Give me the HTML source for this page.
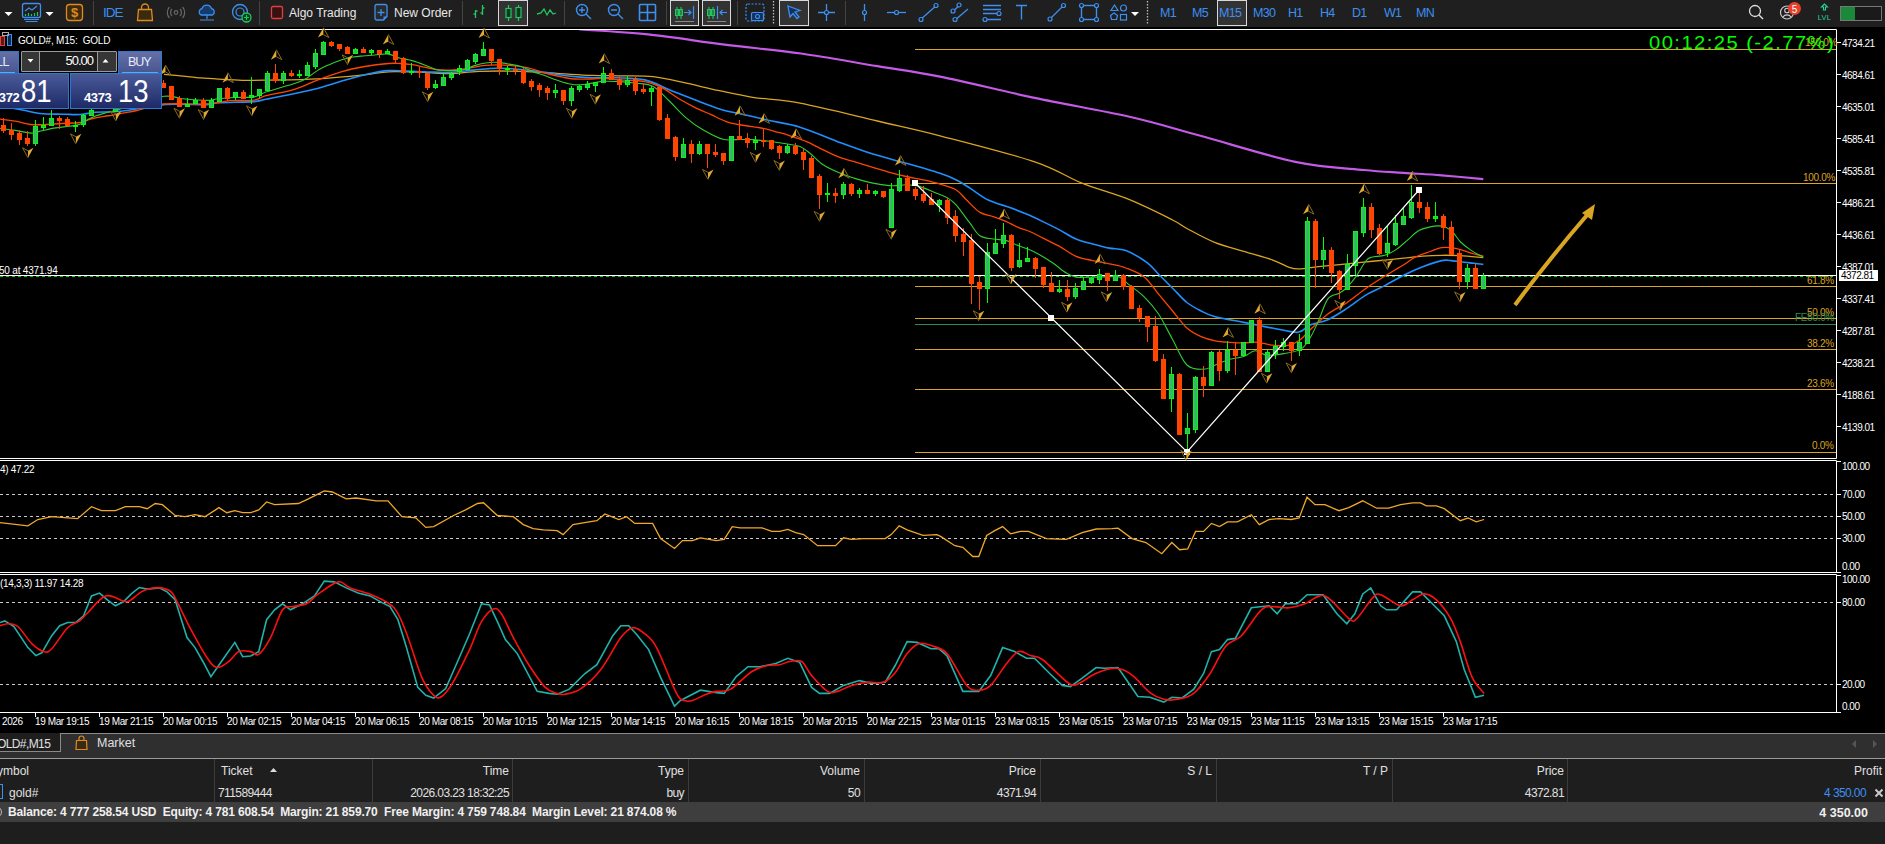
<!DOCTYPE html>
<html><head><meta charset="utf-8">
<style>
*{margin:0;padding:0;box-sizing:border-box}
html,body{width:1885px;height:844px;overflow:hidden;background:#000;font-family:"Liberation Sans",sans-serif}
.a{position:absolute;white-space:nowrap}
.ax{position:absolute;font-size:10px;line-height:10px;color:#fff;white-space:nowrap;letter-spacing:-0.5px}
.fb{position:absolute;font-size:10px;line-height:10px;color:#daa520;white-space:nowrap;letter-spacing:-0.3px}
.tl{position:absolute;top:717px;font-size:10px;line-height:10px;color:#fff;white-space:nowrap;letter-spacing:-0.4px}
.tbt{position:absolute;top:6px;font-size:12px;line-height:15px;color:#e8e8e8;white-space:nowrap}
.tbb{position:absolute;top:6px;font-size:13px;line-height:15px;color:#3d8ff0;white-space:nowrap}
.th{position:absolute;top:764px;font-size:12px;line-height:14px;color:#e0e0e0;white-space:nowrap}
.td{position:absolute;top:787px;font-size:12px;line-height:13px;color:#e0e0e0;white-space:nowrap;letter-spacing:-0.6px}
</style></head><body>

<div class="a" style="left:0;top:0;width:1885px;height:27px;background:#1f1f1f"></div>
<svg class="a" style="left:0;top:0" width="1885" height="27"><path d="M4.5 12 h8 l-4 4 z" fill="#fff"/><path d="M45.5 12 h8 l-4 4 z" fill="#fff"/><path d="M1131 12 h8 l-4 4 z" fill="#fff"/><rect x="22.5" y="3.5" width="18" height="14" rx="2" fill="none" stroke="#3d8ff0" stroke-width="1.3"/><path d="M25 11 l4 -3 l3 2 l5 -4" fill="none" stroke="#3d8ff0" stroke-width="1.2"/><path d="M25.5 16v-2 M28.5 16v-3 M31.5 16v-2 M34.5 16v-3 M37.5 16v-4" stroke="#22c55e" stroke-width="1.2"/><path d="M24 19.5 h15 M25.5 21.5 h12" stroke="#3d8ff0" stroke-width="1.2"/><rect x="66.5" y="4.5" width="16" height="16" rx="3" fill="#3a2a10" stroke="#e08a1e" stroke-width="1.3"/><text x="74.5" y="17" font-size="13" font-weight="bold" fill="#e08a1e" text-anchor="middle" font-family="Liberation Sans">$</text><path d="M93.5 1 v24" stroke="#444" stroke-width="1"/><path d="M259.5 1 v24" stroke="#444" stroke-width="1"/><path d="M462.5 1 v24" stroke="#444" stroke-width="1"/><path d="M564.5 1 v24" stroke="#444" stroke-width="1"/><path d="M666.5 1 v24" stroke="#444" stroke-width="1"/><path d="M737.5 1 v24" stroke="#444" stroke-width="1"/><path d="M845.5 1 v24" stroke="#444" stroke-width="1"/><path d="M773.5 1 v24" stroke="#bbb" stroke-width="1.3" stroke-dasharray="1.5 1.5"/><path d="M1147.5 1 v24" stroke="#bbb" stroke-width="1.3" stroke-dasharray="1.5 1.5"/><path d="M138.5 9.5 h13 l1 11 h-15 z" fill="#3a2a10" stroke="#e08a1e" stroke-width="1.3"/><path d="M141.5 9.5 v-2 a3.5 3.5 0 0 1 7 0 v2" fill="none" stroke="#e08a1e" stroke-width="1.3"/><circle cx="176" cy="12.5" r="1.8" fill="none" stroke="#666" stroke-width="1.2"/><path d="M172 9 a5 5 0 0 0 0 7 M180 9 a5 5 0 0 1 0 7 M169.5 7 a8 8 0 0 0 0 11 M182.5 7 a8 8 0 0 1 0 11" fill="none" stroke="#666" stroke-width="1.2"/><path d="M201 15 a3.5 3.5 0 0 1 1 -6.5 a5 5 0 0 1 9.5 0 a3.5 3.5 0 0 1 1 6.5 z" fill="#163a6a" stroke="#3d8ff0" stroke-width="1.3"/><path d="M207 15 v4 M200 20 h14" stroke="#3d8ff0" stroke-width="1.2"/><circle cx="240" cy="12" r="7.5" fill="none" stroke="#3d8ff0" stroke-width="1.3"/><circle cx="240" cy="12" r="4" fill="none" stroke="#3d8ff0" stroke-width="1.2"/><circle cx="246.5" cy="17.5" r="4.5" fill="#0b3a20" stroke="#22c55e" stroke-width="1.3"/><path d="M246.5 15 v5 M244 17.5 h5" stroke="#22c55e" stroke-width="1.2"/><rect x="271.5" y="6.5" width="11" height="12" rx="1.5" fill="#3a1010" stroke="#e04040" stroke-width="1.3"/><path d="M377 4.5 h8 a2 2 0 0 1 2 2 v10 l-3.5 3.5 h-6.5 a2 2 0 0 1 -2 -2 v-11.5 a2 2 0 0 1 2 -2 z" fill="#2a2a2a" stroke="#3d8ff0" stroke-width="1.3"/><path d="M387 16.5 l-3.5 3.5 v-3.5 z" fill="#3d8ff0"/><path d="M381 9 v7 M377.5 12.5 h7" stroke="#3d8ff0" stroke-width="1.3"/><path d="M475.5 18 v-8 M475.5 14 h-2 M475.5 11 h2 M482.5 15 v-10 M482.5 8 h2 M482.5 13 h-2" stroke="#22c55e" stroke-width="1.3"/><rect x="498.5" y="0.5" width="29" height="25" fill="#333" stroke="#d8d8d8" stroke-width="1"/><path d="M508.5 5 v16 M518.5 5 v16" stroke="#22c55e" stroke-width="1.2"/><rect x="506" y="8.5" width="5" height="9" fill="#0b3a20" stroke="#22c55e" stroke-width="1.2"/><rect x="516" y="7.5" width="5" height="10" fill="#0b3a20" stroke="#22c55e" stroke-width="1.2"/><path d="M537 14 l4 -1 l3 -4 l3 6 l3 -5 l3 4 l3 -1" fill="none" stroke="#22c55e" stroke-width="1.3"/><circle cx="582" cy="10" r="5.5" fill="none" stroke="#3d8ff0" stroke-width="1.4"/><path d="M586 14 l5 5 M579 10 h6 M582 7 v6" stroke="#3d8ff0" stroke-width="1.4"/><circle cx="614" cy="10" r="5.5" fill="none" stroke="#3d8ff0" stroke-width="1.4"/><path d="M618 14 l5 5 M611 10 h6" stroke="#3d8ff0" stroke-width="1.4"/><rect x="639.5" y="4.5" width="16" height="16" rx="1" fill="none" stroke="#3d8ff0" stroke-width="1.6"/><path d="M647.5 4.5 v16 M639.5 12.5 h16" stroke="#3d8ff0" stroke-width="1.6"/><rect x="670.5" y="0.5" width="28" height="25" fill="#333" stroke="#d8d8d8" stroke-width="1"/><rect x="702.5" y="0.5" width="28" height="25" fill="#333" stroke="#d8d8d8" stroke-width="1"/><path d="M677 7 v12 M681 7 v12" stroke="#22c55e" stroke-width="1.1"/><rect x="675.5" y="9.5" width="3" height="6" fill="none" stroke="#22c55e"/><rect x="679.5" y="9.5" width="3" height="6" fill="none" stroke="#22c55e"/><path d="M684 12.5 h7 M688.5 10 l2.5 2.5 l-2.5 2.5 M693.5 6 v13" fill="none" stroke="#3d8ff0" stroke-width="1.2"/><path d="M675 21.5 h19" stroke="#888" stroke-width="1"/><path d="M709 7 v12 M713 7 v12" stroke="#22c55e" stroke-width="1.1"/><rect x="707.5" y="9.5" width="3" height="6" fill="none" stroke="#22c55e"/><rect x="711.5" y="9.5" width="3" height="6" fill="none" stroke="#22c55e"/><path d="M717.5 6 v13 M720 12.5 h7 M722.5 10 l-2.5 2.5 l2.5 2.5" fill="none" stroke="#3d8ff0" stroke-width="1.2"/><path d="M707 21.5 h19" stroke="#888" stroke-width="1"/><rect x="746" y="4" width="18" height="17" rx="2" fill="none" stroke="#3d8ff0" stroke-width="1.2" stroke-dasharray="2 1.5"/><rect x="751.5" y="12.5" width="12" height="8" rx="1" fill="#14305a" stroke="#3d8ff0" stroke-width="1.2"/><circle cx="757.5" cy="16.5" r="2" fill="none" stroke="#3d8ff0" stroke-width="1.1"/><rect x="779.5" y="0.5" width="29" height="25" fill="#333" stroke="#d8d8d8" stroke-width="1"/><path d="M788 6 l12 4.5 l-5 1.5 l4 5 l-2 1.5 l-4 -5 l-3 3.5 z" fill="#14305a" stroke="#3d8ff0" stroke-width="1.3"/><path d="M826.5 4 v17 M818 12.5 h17" stroke="#3d8ff0" stroke-width="1.3"/><circle cx="826.5" cy="12.5" r="2" fill="#1f1f1f" stroke="#3d8ff0" stroke-width="1.2"/><path d="M864.5 4 v17" stroke="#3d8ff0" stroke-width="1.3"/><circle cx="864.5" cy="12.5" r="2" fill="#1f1f1f" stroke="#3d8ff0" stroke-width="1.2"/><path d="M887 12.5 h19" stroke="#3d8ff0" stroke-width="1.3"/><circle cx="896.5" cy="12.5" r="2" fill="#1f1f1f" stroke="#3d8ff0" stroke-width="1.2"/><path d="M920 20 l17 -15" stroke="#3d8ff0" stroke-width="1.3"/><circle cx="921" cy="19.5" r="2" fill="#1f1f1f" stroke="#3d8ff0" stroke-width="1.2"/><circle cx="936" cy="5.5" r="2" fill="#1f1f1f" stroke="#3d8ff0" stroke-width="1.2"/><path d="M951 13 l10 -9 M954 21 l14 -12" stroke="#3d8ff0" stroke-width="1.3"/><circle cx="953" cy="11" r="2" fill="#1f1f1f" stroke="#3d8ff0" stroke-width="1.2"/><circle cx="959" cy="5" r="2" fill="#1f1f1f" stroke="#3d8ff0" stroke-width="1.2"/><circle cx="955" cy="19.5" r="2" fill="#1f1f1f" stroke="#3d8ff0" stroke-width="1.2"/><path d="M983 5.5 h18 M983 9.5 h18 M983 13.5 h14 M983 19.5 h18" stroke="#3d8ff0" stroke-width="1.3"/><circle cx="999" cy="13.5" r="2" fill="#1f1f1f" stroke="#3d8ff0" stroke-width="1.2"/><circle cx="985" cy="19.5" r="2" fill="#1f1f1f" stroke="#3d8ff0" stroke-width="1.2"/><path d="M1016 5.5 h11 M1021.5 5.5 v14" stroke="#3d8ff0" stroke-width="1.4"/><path d="M1050 19 l14 -14" stroke="#3d8ff0" stroke-width="1.3"/><circle cx="1050" cy="19" r="2" fill="#1f1f1f" stroke="#3d8ff0" stroke-width="1.2"/><circle cx="1063.5" cy="5.5" r="2" fill="#1f1f1f" stroke="#3d8ff0" stroke-width="1.2"/><rect x="1081.5" y="5.5" width="15" height="14" fill="none" stroke="#3d8ff0" stroke-width="1.4"/><circle cx="1081.5" cy="5.5" r="2" fill="#1f1f1f" stroke="#3d8ff0" stroke-width="1.2"/><circle cx="1096.5" cy="5.5" r="2" fill="#1f1f1f" stroke="#3d8ff0" stroke-width="1.2"/><circle cx="1081.5" cy="19.5" r="2" fill="#1f1f1f" stroke="#3d8ff0" stroke-width="1.2"/><circle cx="1096.5" cy="19.5" r="2" fill="#1f1f1f" stroke="#3d8ff0" stroke-width="1.2"/><path d="M1114.5 5 l3.5 5.5 h-7 z M1110.5 15.5 l3.5 -2.5 l3.5 2.5 l-1 4 h-5 z" fill="none" stroke="#3d8ff0" stroke-width="1.2"/><circle cx="1123.5" cy="8" r="3" fill="none" stroke="#3d8ff0" stroke-width="1.2"/><rect x="1120.5" y="14.5" width="6" height="5.5" fill="none" stroke="#3d8ff0" stroke-width="1.2"/><rect x="1217.5" y="0.5" width="29" height="25" fill="#333" stroke="#d8d8d8" stroke-width="1"/><circle cx="1755" cy="11" r="5.5" fill="none" stroke="#ddd" stroke-width="1.3"/><path d="M1759 15 l4 4" stroke="#ddd" stroke-width="1.5"/><circle cx="1787" cy="12.5" r="6.5" fill="none" stroke="#ccc" stroke-width="1.2"/><circle cx="1787" cy="10.5" r="2.3" fill="none" stroke="#ccc" stroke-width="1.1"/><path d="M1783 17 a4.5 4 0 0 1 8 0" fill="none" stroke="#ccc" stroke-width="1.1"/><circle cx="1794.5" cy="8.5" r="6.5" fill="#e8402a"/><text x="1794.5" y="12.5" font-size="10" fill="#fff" text-anchor="middle" font-family="Liberation Sans">5</text><path d="M1824.5 4 l-3 3 h2 v3 h2 v-3 h2 z" fill="none" stroke="#22d3a0" stroke-width="1.1"/><text x="1824.5" y="20" font-size="7.5" fill="#22d3a0" text-anchor="middle" font-family="Liberation Sans" letter-spacing="0.3">LVL</text><rect x="1840.5" y="6.5" width="41" height="14" fill="#1a1a1a" stroke="#777" stroke-width="1"/><rect x="1841" y="7" width="14" height="13" fill="#1a8a3a"/></svg>
<div class="tbb" style="left:103px;top:5px;font-size:13.5px;letter-spacing:-1px">IDE</div>
<div class="tbt" style="left:289px">Algo Trading</div>
<div class="tbt" style="left:394px">New Order</div>
<div class="tbb" style="left:1160px;font-size:12.5px;letter-spacing:-0.7px">M1</div>
<div class="tbb" style="left:1192px;font-size:12.5px;letter-spacing:-0.7px">M5</div>
<div class="tbb" style="left:1219px;font-size:12.5px;letter-spacing:-0.7px">M15</div>
<div class="tbb" style="left:1253px;font-size:12.5px;letter-spacing:-0.7px">M30</div>
<div class="tbb" style="left:1288px;font-size:12.5px;letter-spacing:-0.7px">H1</div>
<div class="tbb" style="left:1320px;font-size:12.5px;letter-spacing:-0.7px">H4</div>
<div class="tbb" style="left:1352px;font-size:12.5px;letter-spacing:-0.7px">D1</div>
<div class="tbb" style="left:1384px;font-size:12.5px;letter-spacing:-0.7px">W1</div>
<div class="tbb" style="left:1416px;font-size:12.5px;letter-spacing:-0.7px">MN</div>
<svg class="a" style="left:0;top:0" width="1885" height="733"><defs><clipPath id="cm"><rect x="0" y="30" width="1836" height="428"/></clipPath></defs><rect x="0" y="29" width="1885" height="704" fill="#000"/><path d="M0 29.5 H1836.5 V458.5 H0 M0 460.5 H1836.5 V572.5 H0 M0 574.5 H1836.5 V712.5 H0" fill="none" stroke="#fff" stroke-width="1"/><path d="M1836 42.5 h5" stroke="#fff"/><path d="M1836 74.5 h5" stroke="#fff"/><path d="M1836 106.5 h5" stroke="#fff"/><path d="M1836 138.5 h5" stroke="#fff"/><path d="M1836 170.5 h5" stroke="#fff"/><path d="M1836 202.5 h5" stroke="#fff"/><path d="M1836 234.5 h5" stroke="#fff"/><path d="M1836 266.5 h5" stroke="#fff"/><path d="M1836 298.5 h5" stroke="#fff"/><path d="M1836 330.5 h5" stroke="#fff"/><path d="M1836 362.5 h5" stroke="#fff"/><path d="M1836 394.5 h5" stroke="#fff"/><path d="M1836 426.5 h5" stroke="#fff"/><path d="M1836 461.5 h5" stroke="#fff"/><path d="M1836 494.5 h5" stroke="#fff"/><path d="M1836 516.5 h5" stroke="#fff"/><path d="M1836 538.5 h5" stroke="#fff"/><path d="M1836 572.5 h5" stroke="#fff"/><path d="M1836 575.5 h5" stroke="#fff"/><path d="M1836 602.5 h5" stroke="#fff"/><path d="M1836 684.5 h5" stroke="#fff"/><path d="M1836 712.5 h5" stroke="#fff"/><path d="M0 494.5 H1836" stroke="#c8c8c8" stroke-dasharray="3 3"/><path d="M0 516.5 H1836" stroke="#c8c8c8" stroke-dasharray="3 3"/><path d="M0 538.5 H1836" stroke="#c8c8c8" stroke-dasharray="3 3"/><path d="M0 602.5 H1836" stroke="#c8c8c8" stroke-dasharray="3 3"/><path d="M0 684.5 H1836" stroke="#c8c8c8" stroke-dasharray="3 3"/><path d="M35.5 712 v5" stroke="#fff"/><path d="M99.5 712 v5" stroke="#fff"/><path d="M163.5 712 v5" stroke="#fff"/><path d="M227.5 712 v5" stroke="#fff"/><path d="M291.5 712 v5" stroke="#fff"/><path d="M355.5 712 v5" stroke="#fff"/><path d="M419.5 712 v5" stroke="#fff"/><path d="M483.5 712 v5" stroke="#fff"/><path d="M547.5 712 v5" stroke="#fff"/><path d="M611.5 712 v5" stroke="#fff"/><path d="M675.5 712 v5" stroke="#fff"/><path d="M739.5 712 v5" stroke="#fff"/><path d="M803.5 712 v5" stroke="#fff"/><path d="M867.5 712 v5" stroke="#fff"/><path d="M931.5 712 v5" stroke="#fff"/><path d="M995.5 712 v5" stroke="#fff"/><path d="M1059.5 712 v5" stroke="#fff"/><path d="M1123.5 712 v5" stroke="#fff"/><path d="M1187.5 712 v5" stroke="#fff"/><path d="M1251.5 712 v5" stroke="#fff"/><path d="M1315.5 712 v5" stroke="#fff"/><path d="M1379.5 712 v5" stroke="#fff"/><path d="M1443.5 712 v5" stroke="#fff"/><path d="M915 49.5 H1836" stroke="#daa520"/><path d="M915 183.5 H1836" stroke="#daa520"/><path d="M915 286.5 H1836" stroke="#daa520"/><path d="M915 318.5 H1836" stroke="#daa520"/><path d="M915 349.5 H1836" stroke="#daa520"/><path d="M915 389.5 H1836" stroke="#daa520"/><path d="M915 452.5 H1836" stroke="#daa520"/><path d="M915 324.5 H1836" stroke="#2e8b57"/><path d="M0 275.5 H1836" stroke="#fff" stroke-width="1"/><path d="M0 276.5 H1836" stroke="#00d000" stroke-dasharray="3 3"/><path d="M579.5 29.5 C590.9 30.3 623.8 31.9 648.0 34.4 C672.2 36.9 699.1 41.4 724.6 44.6 C750.1 47.8 775.5 49.9 801.0 53.5 C826.5 57.1 854.2 62.4 877.4 66.2 C900.6 70.0 913.8 71.3 940.0 76.6 C966.2 81.9 1003.1 91.2 1034.7 97.9 C1066.3 104.6 1101.9 110.5 1129.5 116.8 C1157.1 123.1 1172.9 128.3 1200.5 135.8 C1228.1 143.3 1268.1 156.1 1295.3 161.8 C1322.5 167.5 1345.8 168.2 1363.9 170.0 C1382.0 171.8 1390.8 171.9 1403.7 172.8 C1416.7 173.7 1428.3 174.2 1441.6 175.3 C1454.9 176.4 1476.3 178.5 1483.3 179.1" clip-path="url(#cm)" fill="none" stroke="#c45ae6" stroke-width="2.2"/><path d="M164.0 74.4 C167.2 74.7 176.8 75.5 182.9 76.1 C189.0 76.7 194.8 77.4 200.7 77.9 C206.6 78.4 211.6 78.7 218.5 79.1 C225.4 79.5 233.6 80.1 242.2 80.3 C250.8 80.5 257.5 80.3 270.0 80.1 C282.5 79.9 301.6 79.8 317.4 78.9 C333.2 78.0 352.9 76.0 364.8 74.8 C376.7 73.6 378.6 72.2 388.5 71.8 C398.4 71.4 413.8 72.1 424.0 72.4 C434.2 72.7 440.7 73.8 450.0 73.6 C459.3 73.4 467.8 71.7 479.6 71.3 C491.5 70.9 509.2 71.0 521.1 71.3 C533.0 71.6 542.8 72.5 550.7 73.0 C558.6 73.5 561.6 73.8 568.5 74.2 C575.4 74.6 583.6 75.1 592.2 75.4 C600.8 75.7 609.8 75.6 620.0 75.8 C630.2 76.0 642.1 75.4 653.2 76.6 C664.3 77.8 675.4 80.8 686.4 83.2 C697.4 85.6 708.5 88.4 719.5 90.7 C730.5 93.0 739.3 95.2 752.7 97.3 C766.1 99.4 779.2 99.1 800.0 103.1 C820.8 107.0 854.1 115.5 877.4 121.0 C900.7 126.5 913.8 129.0 940.0 135.8 C966.2 142.6 1011.0 153.9 1034.7 161.8 C1058.4 169.7 1066.2 176.9 1082.0 183.2 C1097.8 189.5 1114.4 193.6 1129.5 199.7 C1144.6 205.8 1163.0 215.2 1172.6 220.0 C1182.2 224.8 1179.8 224.7 1186.9 228.5 C1194.0 232.3 1205.8 238.9 1215.3 242.7 C1224.8 246.5 1234.2 248.5 1243.7 251.3 C1253.2 254.2 1264.5 257.1 1272.2 259.8 C1279.9 262.5 1285.5 266.1 1290.0 267.6 C1294.5 269.1 1294.8 269.0 1299.5 268.9 C1304.2 268.8 1310.5 267.5 1318.4 266.7 C1326.3 265.9 1337.4 264.8 1346.9 263.8 C1356.4 262.9 1365.8 261.9 1375.3 261.0 C1384.8 260.1 1395.8 258.9 1403.7 258.1 C1411.6 257.3 1416.4 256.7 1422.7 256.2 C1429.0 255.7 1435.3 255.4 1441.6 255.3 C1447.9 255.2 1453.6 255.3 1460.6 255.7 C1467.5 256.1 1479.5 257.3 1483.3 257.6" fill="none" stroke="#daa520" stroke-width="1.3"/><path d="M0.0 106.0 C3.7 106.7 15.6 108.8 22.3 110.0 C29.0 111.2 33.1 112.8 40.0 113.5 C46.9 114.2 57.2 114.0 63.9 114.2 C70.6 114.4 74.8 114.8 80.0 114.5 C85.2 114.2 89.8 112.8 94.9 112.3 C100.1 111.8 105.6 112.1 110.9 111.8 C116.2 111.5 118.1 111.7 126.9 110.5 C135.8 109.3 150.7 105.6 164.0 104.6 C177.3 103.6 197.5 104.9 206.6 104.6 C215.7 104.3 210.6 103.3 218.5 102.8 C226.4 102.3 246.1 102.2 254.0 101.6 C261.9 101.0 263.2 99.7 265.9 99.2 C268.6 98.7 265.4 99.4 270.0 98.5 C274.6 97.6 285.8 95.4 293.7 93.7 C301.6 92.0 309.5 90.5 317.4 88.4 C325.3 86.3 333.2 83.6 341.1 81.3 C349.0 79.0 356.9 76.6 364.8 74.8 C372.7 73.0 378.6 71.1 388.5 70.6 C398.4 70.1 413.8 71.5 424.0 71.8 C434.2 72.1 441.7 72.7 450.0 72.4 C458.3 72.1 465.8 70.8 473.7 70.1 C481.6 69.4 489.5 68.4 497.4 68.3 C505.3 68.2 513.2 68.8 521.1 69.5 C529.0 70.2 536.9 71.3 544.8 72.4 C552.7 73.5 560.6 75.1 568.5 76.0 C576.4 76.9 584.3 77.5 592.2 77.8 C600.1 78.1 607.1 77.4 615.9 77.8 C624.7 78.2 635.9 77.9 644.9 79.9 C653.9 81.9 661.5 86.6 669.8 89.9 C678.1 93.2 686.4 96.6 694.7 99.8 C703.0 103.0 711.2 106.4 719.5 108.9 C727.8 111.4 736.1 112.8 744.4 114.7 C752.7 116.6 760.0 118.4 769.3 120.5 C778.6 122.6 788.2 123.5 800.0 127.2 C811.8 130.8 827.6 137.9 839.8 142.4 C851.9 146.9 861.8 150.6 872.9 154.1 C884.0 157.6 895.0 160.0 906.1 163.2 C917.2 166.4 931.0 170.3 939.3 173.1 C947.6 175.9 950.8 177.3 955.9 179.8 C961.0 182.3 964.6 184.7 970.0 188.1 C975.4 191.5 981.6 196.8 988.2 200.0 C994.8 203.2 1003.4 205.2 1009.8 207.5 C1016.2 209.8 1020.9 211.8 1026.4 214.1 C1031.9 216.4 1037.4 219.0 1042.9 221.6 C1048.4 224.2 1054.0 227.0 1059.5 229.9 C1065.0 232.8 1070.6 236.7 1076.1 239.0 C1081.6 241.3 1087.2 242.5 1092.7 244.0 C1098.2 245.5 1103.8 247.0 1109.3 248.1 C1114.8 249.2 1119.6 248.2 1125.9 250.6 C1132.2 253.0 1141.7 258.7 1147.1 262.6 C1152.5 266.5 1154.2 269.7 1158.4 274.0 C1162.7 278.3 1167.8 283.4 1172.6 288.2 C1177.3 292.9 1182.2 298.7 1186.9 302.5 C1191.7 306.3 1196.4 308.6 1201.1 311.0 C1205.8 313.4 1208.2 314.8 1215.3 316.7 C1222.4 318.6 1234.2 320.5 1243.7 322.4 C1253.2 324.3 1263.2 326.4 1272.2 328.0 C1281.2 329.6 1291.5 332.8 1297.8 332.3 C1304.1 331.8 1305.0 327.1 1310.0 325.0 C1315.0 322.9 1321.8 322.5 1327.9 319.7 C1334.1 316.9 1340.6 312.5 1346.9 308.4 C1353.2 304.3 1359.5 298.9 1365.8 295.1 C1372.1 291.3 1378.5 288.9 1384.8 285.6 C1391.1 282.3 1397.4 278.4 1403.7 275.2 C1410.0 272.0 1416.4 269.1 1422.7 266.7 C1429.0 264.3 1436.9 261.6 1441.6 260.6 C1446.3 259.6 1446.3 260.2 1451.1 260.6 C1455.8 261.0 1464.7 262.3 1470.1 262.9 C1475.5 263.5 1481.1 264.1 1483.3 264.4" fill="none" stroke="#1e90ff" stroke-width="1.6"/><path d="M0.0 119.2 C2.6 119.5 10.3 120.3 15.4 121.2 C20.5 122.1 25.7 124.0 30.8 124.5 C35.9 125.0 41.1 124.7 46.2 124.5 C51.3 124.3 56.0 123.8 61.6 123.5 C67.2 123.2 75.2 123.2 80.0 122.5 C84.8 121.8 86.7 120.0 90.7 119.0 C94.7 118.0 100.5 116.9 104.0 116.3 C107.5 115.7 108.9 115.8 112.0 115.3 C115.1 114.8 118.4 113.9 122.6 113.1 C126.8 112.3 130.1 112.0 137.0 110.5 C143.9 109.0 152.4 105.1 164.0 104.0 C175.6 102.9 195.5 104.5 206.6 104.0 C217.7 103.5 222.4 101.3 230.3 100.7 C238.2 100.1 248.1 101.0 254.0 100.2 C259.9 99.4 259.3 97.5 265.9 95.7 C272.5 93.9 285.1 92.2 293.7 89.6 C302.3 87.0 309.5 83.1 317.4 80.1 C325.3 77.1 333.2 74.1 341.1 71.8 C349.0 69.5 356.9 67.9 364.8 66.5 C372.7 65.1 382.6 64.0 388.5 63.5 C394.4 63.0 396.4 63.3 400.3 63.5 C404.2 63.7 408.2 64.1 412.1 64.7 C416.1 65.3 420.1 66.3 424.0 67.1 C427.9 67.9 431.5 69.0 435.8 69.5 C440.1 70.0 444.7 70.3 450.0 70.1 C455.3 69.9 461.9 69.1 467.8 68.3 C473.7 67.5 478.6 65.8 485.5 65.3 C492.4 64.8 502.3 64.9 509.2 65.3 C516.1 65.7 521.1 66.4 527.0 67.7 C532.9 69.0 538.9 71.4 544.8 73.0 C550.7 74.6 557.7 76.2 562.6 77.2 C567.5 78.2 569.5 78.7 574.4 79.0 C579.3 79.3 587.3 79.1 592.2 79.0 C597.1 78.9 599.4 78.2 604.0 78.4 C608.6 78.6 613.2 79.4 620.0 79.9 C626.8 80.4 638.0 80.3 644.9 81.6 C651.8 82.8 656.0 84.6 661.5 87.4 C667.0 90.2 672.6 94.9 678.1 98.2 C683.6 101.5 689.2 104.5 694.7 107.3 C700.2 110.0 705.7 112.2 711.2 114.7 C716.7 117.2 722.3 120.4 727.8 122.2 C733.3 124.0 738.9 124.5 744.4 125.5 C749.9 126.5 755.5 126.9 761.0 128.0 C766.5 129.1 772.8 130.9 777.6 132.2 C782.4 133.5 785.2 134.2 790.0 135.8 C794.8 137.4 801.1 139.2 806.6 141.6 C812.1 143.9 817.7 147.3 823.2 149.9 C828.7 152.5 834.3 155.3 839.8 157.4 C845.3 159.5 850.9 160.7 856.4 162.3 C861.9 164.0 867.4 165.6 872.9 167.3 C878.4 169.0 884.0 170.8 889.5 172.3 C895.0 173.8 900.6 175.2 906.1 176.5 C911.6 177.8 917.2 178.6 922.7 179.8 C928.2 181.0 933.8 182.2 939.3 183.9 C944.8 185.6 951.3 187.0 955.9 189.7 C960.5 192.4 962.6 196.2 966.6 200.0 C970.6 203.8 975.5 209.6 979.9 212.4 C984.3 215.2 988.8 215.1 993.2 216.6 C997.6 218.1 1002.2 219.8 1006.4 221.6 C1010.5 223.4 1014.2 225.8 1018.1 227.4 C1022.0 229.1 1025.5 229.7 1029.7 231.5 C1033.9 233.3 1038.0 235.7 1043.0 238.2 C1048.0 240.7 1054.0 243.4 1059.5 246.4 C1065.0 249.4 1070.6 254.0 1076.1 256.4 C1081.6 258.8 1087.2 259.4 1092.7 260.6 C1098.2 261.9 1103.8 262.7 1109.3 263.9 C1114.8 265.1 1120.1 265.8 1125.9 268.0 C1131.7 270.2 1138.8 272.6 1144.2 276.9 C1149.6 281.2 1153.7 288.2 1158.4 293.9 C1163.1 299.6 1167.8 305.3 1172.6 311.0 C1177.3 316.7 1182.2 323.7 1186.9 328.0 C1191.7 332.3 1196.4 334.5 1201.1 336.6 C1205.8 338.7 1210.6 339.9 1215.3 340.8 C1220.0 341.8 1224.8 342.0 1229.5 342.3 C1234.2 342.6 1239.0 342.8 1243.7 342.8 C1248.4 342.8 1253.2 341.9 1257.9 342.3 C1262.7 342.7 1267.0 344.6 1272.2 345.1 C1277.4 345.6 1284.5 346.1 1289.2 345.1 C1293.9 344.2 1297.1 341.9 1300.6 339.4 C1304.1 336.9 1305.5 334.2 1310.0 330.0 C1314.5 325.8 1321.8 318.6 1327.9 314.0 C1334.1 309.4 1340.6 306.9 1346.9 302.7 C1353.2 298.4 1359.5 292.9 1365.8 288.5 C1372.1 284.1 1378.5 280.1 1384.8 276.1 C1391.1 272.2 1398.7 268.0 1403.7 264.8 C1408.8 261.6 1410.7 259.4 1415.1 257.2 C1419.5 255.0 1425.9 253.1 1430.3 251.5 C1434.7 249.9 1438.1 248.3 1441.6 247.7 C1445.1 247.1 1447.9 247.4 1451.1 247.7 C1454.3 248.0 1457.1 248.6 1460.6 249.6 C1464.1 250.6 1468.2 252.3 1472.0 253.4 C1475.8 254.5 1481.4 255.7 1483.3 256.2" fill="none" stroke="#ff4500" stroke-width="1.3"/><path d="M0.0 128.5 C2.6 128.8 10.3 129.6 15.4 130.4 C20.5 131.2 26.9 132.9 30.8 133.1 C34.6 133.3 34.6 132.4 38.5 131.6 C42.4 130.8 48.8 129.0 53.9 128.1 C59.0 127.2 65.0 126.8 69.3 126.2 C73.6 125.6 76.9 125.4 80.0 124.3 C83.1 123.2 85.3 120.9 88.0 119.5 C90.7 118.1 93.3 116.8 96.0 115.8 C98.7 114.8 100.9 114.3 104.0 113.4 C107.1 112.5 110.3 111.7 114.6 110.5 C118.9 109.3 121.8 108.4 130.0 106.0 C138.2 103.6 155.2 97.5 164.0 96.3 C172.8 95.1 175.8 98.0 182.9 98.7 C190.0 99.4 200.7 100.4 206.6 100.4 C212.5 100.4 213.6 99.2 218.5 98.7 C223.4 98.2 230.4 97.8 236.3 97.5 C242.2 97.2 249.1 97.8 254.0 96.9 C258.9 96.0 261.3 93.7 265.9 92.1 C270.5 90.5 277.2 88.6 281.8 87.2 C286.4 85.8 289.8 85.1 293.7 83.7 C297.6 82.3 301.6 81.1 305.5 78.9 C309.4 76.7 313.4 73.0 317.4 70.6 C321.3 68.2 325.2 66.5 329.2 64.7 C333.1 62.9 337.2 61.3 341.1 60.0 C345.1 58.7 348.9 57.7 352.9 57.0 C356.8 56.3 360.9 56.2 364.8 55.8 C368.8 55.4 372.7 55.0 376.6 54.7 C380.6 54.4 384.6 53.5 388.5 54.1 C392.4 54.7 396.4 57.1 400.3 58.2 C404.2 59.3 408.2 59.5 412.1 60.6 C416.1 61.7 420.1 63.2 424.0 64.7 C427.9 66.2 431.9 68.5 435.8 69.5 C439.8 70.5 443.4 70.5 447.7 70.6 C452.0 70.7 457.5 70.9 461.8 70.1 C466.1 69.3 469.8 67.1 473.7 65.9 C477.6 64.7 481.6 63.6 485.5 63.0 C489.4 62.4 493.4 62.2 497.4 62.4 C501.3 62.6 505.2 63.4 509.2 64.1 C513.1 64.8 517.1 65.2 521.1 66.5 C525.1 67.8 529.0 70.3 533.0 71.8 C537.0 73.3 540.9 74.0 544.8 75.4 C548.7 76.8 552.6 78.7 556.6 80.1 C560.6 81.5 564.5 82.9 568.5 83.7 C572.5 84.5 576.3 85.0 580.3 84.9 C584.2 84.8 588.2 83.7 592.2 83.1 C596.2 82.5 599.4 81.5 604.0 81.3 C608.6 81.0 614.6 81.3 620.0 81.6 C625.4 81.9 631.1 82.4 636.6 83.2 C642.1 84.0 647.7 83.5 653.2 86.5 C658.7 89.5 664.3 96.2 669.8 101.5 C675.3 106.8 680.9 113.4 686.4 118.1 C691.9 122.8 696.8 126.2 702.9 129.7 C709.0 133.2 717.4 137.7 722.9 139.3 C728.4 141.0 731.1 139.6 736.1 139.6 C741.1 139.6 747.2 139.3 752.7 139.6 C758.2 139.9 763.8 140.6 769.3 141.3 C774.8 142.0 780.8 142.9 785.9 143.8 C791.0 144.7 796.0 145.0 800.0 146.6 C804.0 148.2 806.0 150.2 809.9 153.2 C813.8 156.2 818.2 161.5 823.2 164.8 C828.2 168.1 834.3 170.8 839.8 173.1 C845.3 175.4 850.9 177.2 856.4 178.9 C861.9 180.6 867.4 182.0 872.9 183.1 C878.4 184.2 885.4 185.2 889.5 185.6 C893.6 186.0 895.0 185.8 897.8 185.6 C900.6 185.4 902.5 184.6 906.1 184.7 C909.7 184.8 914.4 185.0 919.4 186.4 C924.4 187.8 931.3 191.1 936.0 193.0 C940.7 194.9 944.3 196.1 947.6 198.0 C950.9 199.9 952.2 200.5 955.9 204.7 C959.6 208.9 966.0 218.0 970.0 223.2 C974.0 228.4 976.0 233.1 979.9 235.7 C983.8 238.3 988.8 238.2 993.2 239.0 C997.6 239.8 1002.2 239.5 1006.4 240.6 C1010.5 241.7 1014.2 244.1 1018.1 245.6 C1022.0 247.1 1026.1 248.3 1029.7 249.8 C1033.3 251.3 1035.7 252.5 1039.6 254.7 C1043.5 256.9 1048.5 259.9 1052.9 263.0 C1057.3 266.1 1062.3 270.6 1066.2 273.0 C1070.1 275.4 1071.7 276.4 1076.1 277.1 C1080.5 277.8 1087.2 277.2 1092.7 277.1 C1098.2 277.0 1104.9 276.6 1109.3 276.6 C1113.7 276.6 1115.8 275.6 1119.3 277.1 C1122.8 278.6 1125.8 282.1 1130.0 285.4 C1134.2 288.7 1139.5 292.1 1144.2 296.8 C1148.9 301.5 1153.7 306.7 1158.4 313.8 C1163.1 320.9 1167.8 330.9 1172.6 339.4 C1177.3 347.9 1181.7 360.0 1186.9 365.0 C1192.1 370.0 1199.2 369.3 1203.9 369.3 C1208.6 369.3 1211.0 366.7 1215.3 365.0 C1219.6 363.3 1224.8 360.7 1229.5 359.3 C1234.2 357.9 1239.4 357.9 1243.7 356.5 C1248.0 355.1 1251.3 351.0 1255.1 350.8 C1258.9 350.6 1261.8 354.6 1266.5 355.1 C1271.2 355.6 1277.8 354.6 1283.5 353.6 C1289.2 352.7 1296.2 352.0 1300.6 349.4 C1305.0 346.8 1307.1 342.6 1310.0 338.0 C1312.9 333.4 1315.0 328.5 1318.0 322.0 C1321.0 315.5 1324.4 303.7 1327.9 298.9 C1331.5 294.1 1336.1 295.1 1339.3 293.2 C1342.5 291.3 1344.1 290.4 1346.9 287.5 C1349.7 284.6 1353.2 280.5 1356.3 276.1 C1359.4 271.7 1363.3 264.1 1365.8 261.0 C1368.3 257.9 1368.3 258.1 1371.5 257.2 C1374.7 256.2 1380.7 256.6 1384.8 255.3 C1388.9 254.0 1392.3 252.1 1396.1 249.6 C1399.9 247.1 1403.7 243.3 1407.5 240.1 C1411.3 236.9 1415.1 232.8 1418.9 230.6 C1422.7 228.4 1427.2 227.7 1430.3 226.9 C1433.4 226.1 1435.3 225.9 1437.8 225.9 C1440.3 225.9 1442.9 225.8 1445.4 226.9 C1447.9 228.0 1450.5 230.0 1453.0 232.5 C1455.5 235.0 1457.8 239.2 1460.6 242.0 C1463.4 244.8 1466.9 247.4 1470.1 249.6 C1473.2 251.8 1477.3 254.1 1479.5 255.3 C1481.7 256.5 1482.7 256.6 1483.3 256.8" fill="none" stroke="#32cd32" stroke-width="1.1"/><g shape-rendering="crispEdges"><rect x="1483" y="273" width="1" height="15" fill="#00ff00"/><rect x="1481" y="276" width="5" height="13" fill="#00ff00"/><rect x="1482" y="277" width="3" height="11" fill="#3cb371"/><rect x="1475" y="264" width="1" height="25" fill="#ff4500"/><rect x="1473" y="268" width="5" height="21" fill="#ff4500"/><rect x="1467" y="264" width="1" height="25" fill="#00ff00"/><rect x="1465" y="268" width="5" height="14" fill="#00ff00"/><rect x="1466" y="269" width="3" height="12" fill="#3cb371"/><rect x="1459" y="250" width="1" height="39" fill="#ff4500"/><rect x="1457" y="253" width="5" height="29" fill="#ff4500"/><rect x="1451" y="221" width="1" height="33" fill="#ff4500"/><rect x="1449" y="227" width="5" height="28" fill="#ff4500"/><rect x="1443" y="214" width="1" height="26" fill="#ff4500"/><rect x="1441" y="216" width="5" height="12" fill="#ff4500"/><rect x="1435" y="202" width="1" height="20" fill="#00ff00"/><rect x="1433" y="216" width="5" height="3" fill="#00ff00"/><rect x="1434" y="217" width="3" height="1" fill="#3cb371"/><rect x="1427" y="202" width="1" height="20" fill="#ff4500"/><rect x="1425" y="207" width="5" height="12" fill="#ff4500"/><rect x="1419" y="190" width="1" height="23" fill="#ff4500"/><rect x="1417" y="202" width="5" height="6" fill="#ff4500"/><rect x="1411" y="185" width="1" height="34" fill="#00ff00"/><rect x="1409" y="202" width="5" height="16" fill="#00ff00"/><rect x="1410" y="203" width="3" height="14" fill="#3cb371"/><rect x="1403" y="207" width="1" height="17" fill="#00ff00"/><rect x="1401" y="216" width="5" height="9" fill="#00ff00"/><rect x="1402" y="217" width="3" height="7" fill="#3cb371"/><rect x="1395" y="215" width="1" height="31" fill="#00ff00"/><rect x="1393" y="223" width="5" height="22" fill="#00ff00"/><rect x="1394" y="224" width="3" height="20" fill="#3cb371"/><rect x="1387" y="226" width="1" height="31" fill="#00ff00"/><rect x="1385" y="243" width="5" height="10" fill="#00ff00"/><rect x="1386" y="244" width="3" height="8" fill="#3cb371"/><rect x="1379" y="224" width="1" height="31" fill="#ff4500"/><rect x="1377" y="228" width="5" height="26" fill="#ff4500"/><rect x="1371" y="203" width="1" height="35" fill="#ff4500"/><rect x="1369" y="207" width="5" height="23" fill="#ff4500"/><rect x="1363" y="198" width="1" height="39" fill="#00ff00"/><rect x="1361" y="207" width="5" height="26" fill="#00ff00"/><rect x="1362" y="208" width="3" height="24" fill="#3cb371"/><rect x="1355" y="231" width="1" height="44" fill="#00ff00"/><rect x="1353" y="231" width="5" height="35" fill="#00ff00"/><rect x="1354" y="232" width="3" height="33" fill="#3cb371"/><rect x="1347" y="254" width="1" height="35" fill="#00ff00"/><rect x="1345" y="264" width="5" height="26" fill="#00ff00"/><rect x="1346" y="265" width="3" height="24" fill="#3cb371"/><rect x="1339" y="270" width="1" height="29" fill="#ff4500"/><rect x="1337" y="271" width="5" height="19" fill="#ff4500"/><rect x="1331" y="247" width="1" height="36" fill="#ff4500"/><rect x="1329" y="250" width="5" height="23" fill="#ff4500"/><rect x="1323" y="237" width="1" height="32" fill="#00ff00"/><rect x="1321" y="250" width="5" height="10" fill="#00ff00"/><rect x="1322" y="251" width="3" height="8" fill="#3cb371"/><rect x="1315" y="219" width="1" height="69" fill="#ff4500"/><rect x="1313" y="221" width="5" height="39" fill="#ff4500"/><rect x="1307" y="217" width="1" height="126" fill="#00ff00"/><rect x="1305" y="221" width="5" height="123" fill="#00ff00"/><rect x="1306" y="222" width="3" height="121" fill="#3cb371"/><rect x="1299" y="334" width="1" height="22" fill="#00ff00"/><rect x="1297" y="342" width="5" height="9" fill="#00ff00"/><rect x="1298" y="343" width="3" height="7" fill="#3cb371"/><rect x="1291" y="342" width="1" height="19" fill="#ff4500"/><rect x="1289" y="342" width="5" height="9" fill="#ff4500"/><rect x="1283" y="338" width="1" height="13" fill="#00ff00"/><rect x="1281" y="342" width="5" height="5" fill="#00ff00"/><rect x="1282" y="343" width="3" height="3" fill="#3cb371"/><rect x="1275" y="340" width="1" height="19" fill="#00ff00"/><rect x="1273" y="346" width="5" height="8" fill="#00ff00"/><rect x="1274" y="347" width="3" height="6" fill="#3cb371"/><rect x="1267" y="350" width="1" height="21" fill="#00ff00"/><rect x="1265" y="352" width="5" height="20" fill="#00ff00"/><rect x="1266" y="353" width="3" height="18" fill="#3cb371"/><rect x="1259" y="317" width="1" height="54" fill="#ff4500"/><rect x="1257" y="320" width="5" height="52" fill="#ff4500"/><rect x="1251" y="320" width="1" height="23" fill="#00ff00"/><rect x="1249" y="320" width="5" height="23" fill="#00ff00"/><rect x="1250" y="321" width="3" height="21" fill="#3cb371"/><rect x="1243" y="342" width="1" height="14" fill="#00ff00"/><rect x="1241" y="342" width="5" height="14" fill="#00ff00"/><rect x="1242" y="343" width="3" height="12" fill="#3cb371"/><rect x="1235" y="342" width="1" height="33" fill="#ff4500"/><rect x="1233" y="350" width="5" height="6" fill="#ff4500"/><rect x="1227" y="341" width="1" height="32" fill="#00ff00"/><rect x="1225" y="350" width="5" height="21" fill="#00ff00"/><rect x="1226" y="351" width="3" height="19" fill="#3cb371"/><rect x="1219" y="350" width="1" height="31" fill="#ff4500"/><rect x="1217" y="352" width="5" height="19" fill="#ff4500"/><rect x="1211" y="351" width="1" height="34" fill="#00ff00"/><rect x="1209" y="352" width="5" height="34" fill="#00ff00"/><rect x="1210" y="353" width="3" height="32" fill="#3cb371"/><rect x="1203" y="366" width="1" height="31" fill="#ff4500"/><rect x="1201" y="377" width="5" height="9" fill="#ff4500"/><rect x="1195" y="376" width="1" height="57" fill="#00ff00"/><rect x="1193" y="377" width="5" height="53" fill="#00ff00"/><rect x="1194" y="378" width="3" height="51" fill="#3cb371"/><rect x="1187" y="413" width="1" height="39" fill="#00ff00"/><rect x="1185" y="428" width="5" height="6" fill="#00ff00"/><rect x="1186" y="429" width="3" height="4" fill="#3cb371"/><rect x="1179" y="373" width="1" height="61" fill="#ff4500"/><rect x="1177" y="374" width="5" height="61" fill="#ff4500"/><rect x="1171" y="367" width="1" height="45" fill="#00ff00"/><rect x="1169" y="374" width="5" height="25" fill="#00ff00"/><rect x="1170" y="375" width="3" height="23" fill="#3cb371"/><rect x="1163" y="354" width="1" height="44" fill="#ff4500"/><rect x="1161" y="359" width="5" height="40" fill="#ff4500"/><rect x="1155" y="316" width="1" height="46" fill="#ff4500"/><rect x="1153" y="326" width="5" height="35" fill="#ff4500"/><rect x="1147" y="316" width="1" height="26" fill="#ff4500"/><rect x="1145" y="316" width="5" height="11" fill="#ff4500"/><rect x="1139" y="305" width="1" height="17" fill="#ff4500"/><rect x="1137" y="308" width="5" height="10" fill="#ff4500"/><rect x="1131" y="285" width="1" height="24" fill="#ff4500"/><rect x="1129" y="286" width="5" height="23" fill="#ff4500"/><rect x="1123" y="274" width="1" height="16" fill="#ff4500"/><rect x="1121" y="275" width="5" height="12" fill="#ff4500"/><rect x="1115" y="270" width="1" height="11" fill="#00ff00"/><rect x="1113" y="275" width="5" height="6" fill="#00ff00"/><rect x="1114" y="276" width="3" height="4" fill="#3cb371"/><rect x="1107" y="273" width="1" height="18" fill="#ff4500"/><rect x="1105" y="273" width="5" height="8" fill="#ff4500"/><rect x="1099" y="269" width="1" height="15" fill="#00ff00"/><rect x="1097" y="274" width="5" height="6" fill="#00ff00"/><rect x="1098" y="275" width="3" height="4" fill="#3cb371"/><rect x="1091" y="277" width="1" height="7" fill="#00ff00"/><rect x="1089" y="278" width="5" height="5" fill="#00ff00"/><rect x="1090" y="279" width="3" height="3" fill="#3cb371"/><rect x="1083" y="277" width="1" height="12" fill="#00ff00"/><rect x="1081" y="281" width="5" height="9" fill="#00ff00"/><rect x="1082" y="282" width="3" height="7" fill="#3cb371"/><rect x="1075" y="283" width="1" height="16" fill="#00ff00"/><rect x="1073" y="288" width="5" height="9" fill="#00ff00"/><rect x="1074" y="289" width="3" height="7" fill="#3cb371"/><rect x="1067" y="280" width="1" height="21" fill="#ff4500"/><rect x="1065" y="289" width="5" height="8" fill="#ff4500"/><rect x="1059" y="280" width="1" height="13" fill="#00ff00"/><rect x="1057" y="289" width="5" height="3" fill="#00ff00"/><rect x="1058" y="290" width="3" height="1" fill="#3cb371"/><rect x="1051" y="272" width="1" height="19" fill="#ff4500"/><rect x="1049" y="283" width="5" height="9" fill="#ff4500"/><rect x="1043" y="267" width="1" height="21" fill="#ff4500"/><rect x="1041" y="267" width="5" height="18" fill="#ff4500"/><rect x="1035" y="257" width="1" height="21" fill="#ff4500"/><rect x="1033" y="258" width="5" height="11" fill="#ff4500"/><rect x="1027" y="247" width="1" height="15" fill="#00ff00"/><rect x="1025" y="258" width="5" height="4" fill="#00ff00"/><rect x="1026" y="259" width="3" height="2" fill="#3cb371"/><rect x="1019" y="243" width="1" height="25" fill="#00ff00"/><rect x="1017" y="260" width="5" height="7" fill="#00ff00"/><rect x="1018" y="261" width="3" height="5" fill="#3cb371"/><rect x="1011" y="234" width="1" height="37" fill="#ff4500"/><rect x="1009" y="235" width="5" height="33" fill="#ff4500"/><rect x="1003" y="223" width="1" height="25" fill="#00ff00"/><rect x="1001" y="235" width="5" height="9" fill="#00ff00"/><rect x="1002" y="236" width="3" height="7" fill="#3cb371"/><rect x="995" y="229" width="1" height="24" fill="#00ff00"/><rect x="993" y="243" width="5" height="11" fill="#00ff00"/><rect x="994" y="244" width="3" height="9" fill="#3cb371"/><rect x="987" y="243" width="1" height="60" fill="#00ff00"/><rect x="985" y="252" width="5" height="37" fill="#00ff00"/><rect x="986" y="253" width="3" height="35" fill="#3cb371"/><rect x="979" y="276" width="1" height="34" fill="#ff4500"/><rect x="977" y="282" width="5" height="7" fill="#ff4500"/><rect x="971" y="234" width="1" height="70" fill="#ff4500"/><rect x="969" y="240" width="5" height="44" fill="#ff4500"/><rect x="963" y="228" width="1" height="28" fill="#ff4500"/><rect x="961" y="234" width="5" height="8" fill="#ff4500"/><rect x="955" y="210" width="1" height="32" fill="#ff4500"/><rect x="953" y="216" width="5" height="20" fill="#ff4500"/><rect x="947" y="198" width="1" height="26" fill="#ff4500"/><rect x="945" y="200" width="5" height="18" fill="#ff4500"/><rect x="939" y="199" width="1" height="13" fill="#00ff00"/><rect x="937" y="200" width="5" height="5" fill="#00ff00"/><rect x="938" y="201" width="3" height="3" fill="#3cb371"/><rect x="931" y="193" width="1" height="12" fill="#ff4500"/><rect x="929" y="199" width="5" height="6" fill="#ff4500"/><rect x="923" y="186" width="1" height="17" fill="#ff4500"/><rect x="921" y="194" width="5" height="7" fill="#ff4500"/><rect x="915" y="187" width="1" height="13" fill="#ff4500"/><rect x="913" y="189" width="5" height="7" fill="#ff4500"/><rect x="907" y="175" width="1" height="15" fill="#ff4500"/><rect x="905" y="178" width="5" height="13" fill="#ff4500"/><rect x="899" y="170" width="1" height="22" fill="#00ff00"/><rect x="897" y="178" width="5" height="13" fill="#00ff00"/><rect x="898" y="179" width="3" height="11" fill="#3cb371"/><rect x="891" y="183" width="1" height="45" fill="#00ff00"/><rect x="889" y="189" width="5" height="39" fill="#00ff00"/><rect x="890" y="190" width="3" height="37" fill="#3cb371"/><rect x="883" y="191" width="1" height="7" fill="#ff4500"/><rect x="881" y="191" width="5" height="6" fill="#ff4500"/><rect x="875" y="190" width="1" height="6" fill="#00ff00"/><rect x="873" y="191" width="5" height="3" fill="#00ff00"/><rect x="874" y="192" width="3" height="1" fill="#3cb371"/><rect x="867" y="184" width="1" height="10" fill="#ff4500"/><rect x="865" y="190" width="5" height="4" fill="#ff4500"/><rect x="859" y="188" width="1" height="10" fill="#00ff00"/><rect x="857" y="190" width="5" height="4" fill="#00ff00"/><rect x="858" y="191" width="3" height="2" fill="#3cb371"/><rect x="851" y="183" width="1" height="13" fill="#ff4500"/><rect x="849" y="184" width="5" height="10" fill="#ff4500"/><rect x="843" y="182" width="1" height="17" fill="#00ff00"/><rect x="841" y="184" width="5" height="11" fill="#00ff00"/><rect x="842" y="185" width="3" height="9" fill="#3cb371"/><rect x="835" y="188" width="1" height="15" fill="#ff4500"/><rect x="833" y="193" width="5" height="3" fill="#ff4500"/><rect x="827" y="183" width="1" height="19" fill="#00ff00"/><rect x="825" y="193" width="5" height="2" fill="#00ff00"/><rect x="819" y="174" width="1" height="35" fill="#ff4500"/><rect x="817" y="176" width="5" height="19" fill="#ff4500"/><rect x="811" y="156" width="1" height="21" fill="#ff4500"/><rect x="809" y="158" width="5" height="20" fill="#ff4500"/><rect x="803" y="149" width="1" height="21" fill="#ff4500"/><rect x="801" y="152" width="5" height="8" fill="#ff4500"/><rect x="795" y="143" width="1" height="12" fill="#ff4500"/><rect x="793" y="146" width="5" height="8" fill="#ff4500"/><rect x="787" y="144" width="1" height="10" fill="#00ff00"/><rect x="785" y="146" width="5" height="7" fill="#00ff00"/><rect x="786" y="147" width="3" height="5" fill="#3cb371"/><rect x="779" y="145" width="1" height="14" fill="#ff4500"/><rect x="777" y="146" width="5" height="7" fill="#ff4500"/><rect x="771" y="140" width="1" height="10" fill="#ff4500"/><rect x="769" y="140" width="5" height="9" fill="#ff4500"/><rect x="763" y="128" width="1" height="19" fill="#ff4500"/><rect x="761" y="140" width="5" height="2" fill="#ff4500"/><rect x="755" y="136" width="1" height="14" fill="#00ff00"/><rect x="753" y="140" width="5" height="3" fill="#00ff00"/><rect x="754" y="141" width="3" height="1" fill="#3cb371"/><rect x="747" y="133" width="1" height="15" fill="#ff4500"/><rect x="745" y="138" width="5" height="5" fill="#ff4500"/><rect x="739" y="120" width="1" height="19" fill="#ff4500"/><rect x="737" y="136" width="5" height="4" fill="#ff4500"/><rect x="731" y="136" width="1" height="24" fill="#00ff00"/><rect x="729" y="136" width="5" height="25" fill="#00ff00"/><rect x="730" y="137" width="3" height="23" fill="#3cb371"/><rect x="723" y="153" width="1" height="12" fill="#ff4500"/><rect x="721" y="153" width="5" height="8" fill="#ff4500"/><rect x="715" y="144" width="1" height="13" fill="#ff4500"/><rect x="713" y="152" width="5" height="3" fill="#ff4500"/><rect x="707" y="144" width="1" height="24" fill="#ff4500"/><rect x="705" y="144" width="5" height="10" fill="#ff4500"/><rect x="699" y="141" width="1" height="14" fill="#00ff00"/><rect x="697" y="144" width="5" height="10" fill="#00ff00"/><rect x="698" y="145" width="3" height="8" fill="#3cb371"/><rect x="691" y="140" width="1" height="23" fill="#ff4500"/><rect x="689" y="144" width="5" height="10" fill="#ff4500"/><rect x="683" y="138" width="1" height="19" fill="#00ff00"/><rect x="681" y="144" width="5" height="14" fill="#00ff00"/><rect x="682" y="145" width="3" height="12" fill="#3cb371"/><rect x="675" y="136" width="1" height="25" fill="#ff4500"/><rect x="673" y="137" width="5" height="20" fill="#ff4500"/><rect x="667" y="114" width="1" height="25" fill="#ff4500"/><rect x="665" y="118" width="5" height="21" fill="#ff4500"/><rect x="659" y="86" width="1" height="35" fill="#ff4500"/><rect x="657" y="87" width="5" height="33" fill="#ff4500"/><rect x="651" y="86" width="1" height="20" fill="#00ff00"/><rect x="649" y="88" width="5" height="4" fill="#00ff00"/><rect x="650" y="89" width="3" height="2" fill="#3cb371"/><rect x="643" y="83" width="1" height="11" fill="#ff4500"/><rect x="641" y="89" width="5" height="3" fill="#ff4500"/><rect x="635" y="77" width="1" height="18" fill="#ff4500"/><rect x="633" y="79" width="5" height="12" fill="#ff4500"/><rect x="627" y="76" width="1" height="11" fill="#00ff00"/><rect x="625" y="80" width="5" height="5" fill="#00ff00"/><rect x="626" y="81" width="3" height="3" fill="#3cb371"/><rect x="619" y="76" width="1" height="14" fill="#ff4500"/><rect x="617" y="79" width="5" height="6" fill="#ff4500"/><rect x="611" y="69" width="1" height="10" fill="#ff4500"/><rect x="609" y="73" width="5" height="7" fill="#ff4500"/><rect x="603" y="67" width="1" height="15" fill="#00ff00"/><rect x="601" y="73" width="5" height="10" fill="#00ff00"/><rect x="602" y="74" width="3" height="8" fill="#3cb371"/><rect x="595" y="82" width="1" height="10" fill="#00ff00"/><rect x="593" y="82" width="5" height="4" fill="#00ff00"/><rect x="594" y="83" width="3" height="2" fill="#3cb371"/><rect x="587" y="81" width="1" height="9" fill="#00ff00"/><rect x="585" y="84" width="5" height="4" fill="#00ff00"/><rect x="586" y="85" width="3" height="2" fill="#3cb371"/><rect x="579" y="85" width="1" height="7" fill="#00ff00"/><rect x="577" y="86" width="5" height="4" fill="#00ff00"/><rect x="578" y="87" width="3" height="2" fill="#3cb371"/><rect x="571" y="86" width="1" height="20" fill="#00ff00"/><rect x="569" y="88" width="5" height="13" fill="#00ff00"/><rect x="570" y="89" width="3" height="11" fill="#3cb371"/><rect x="563" y="90" width="1" height="15" fill="#ff4500"/><rect x="561" y="90" width="5" height="11" fill="#ff4500"/><rect x="555" y="84" width="1" height="14" fill="#00ff00"/><rect x="553" y="90" width="5" height="3" fill="#00ff00"/><rect x="554" y="91" width="3" height="1" fill="#3cb371"/><rect x="547" y="86" width="1" height="14" fill="#ff4500"/><rect x="545" y="88" width="5" height="5" fill="#ff4500"/><rect x="539" y="83" width="1" height="14" fill="#ff4500"/><rect x="537" y="85" width="5" height="5" fill="#ff4500"/><rect x="531" y="79" width="1" height="12" fill="#ff4500"/><rect x="529" y="81" width="5" height="6" fill="#ff4500"/><rect x="523" y="68" width="1" height="16" fill="#ff4500"/><rect x="521" y="70" width="5" height="13" fill="#ff4500"/><rect x="515" y="66" width="1" height="9" fill="#ff4500"/><rect x="513" y="69" width="5" height="2" fill="#ff4500"/><rect x="507" y="66" width="1" height="9" fill="#00ff00"/><rect x="505" y="68" width="5" height="2" fill="#00ff00"/><rect x="499" y="59" width="1" height="16" fill="#ff4500"/><rect x="497" y="59" width="5" height="10" fill="#ff4500"/><rect x="491" y="49" width="1" height="16" fill="#ff4500"/><rect x="489" y="49" width="5" height="12" fill="#ff4500"/><rect x="483" y="42" width="1" height="13" fill="#00ff00"/><rect x="481" y="49" width="5" height="7" fill="#00ff00"/><rect x="482" y="50" width="3" height="5" fill="#3cb371"/><rect x="475" y="53" width="1" height="11" fill="#00ff00"/><rect x="473" y="54" width="5" height="8" fill="#00ff00"/><rect x="474" y="55" width="3" height="6" fill="#3cb371"/><rect x="467" y="59" width="1" height="10" fill="#00ff00"/><rect x="465" y="60" width="5" height="10" fill="#00ff00"/><rect x="466" y="61" width="3" height="8" fill="#3cb371"/><rect x="459" y="65" width="1" height="10" fill="#00ff00"/><rect x="457" y="68" width="5" height="4" fill="#00ff00"/><rect x="458" y="69" width="3" height="2" fill="#3cb371"/><rect x="451" y="72" width="1" height="8" fill="#00ff00"/><rect x="449" y="74" width="5" height="4" fill="#00ff00"/><rect x="450" y="75" width="3" height="2" fill="#3cb371"/><rect x="443" y="74" width="1" height="12" fill="#00ff00"/><rect x="441" y="77" width="5" height="9" fill="#00ff00"/><rect x="442" y="78" width="3" height="7" fill="#3cb371"/><rect x="435" y="80" width="1" height="9" fill="#00ff00"/><rect x="433" y="84" width="5" height="4" fill="#00ff00"/><rect x="434" y="85" width="3" height="2" fill="#3cb371"/><rect x="427" y="73" width="1" height="17" fill="#ff4500"/><rect x="425" y="73" width="5" height="15" fill="#ff4500"/><rect x="419" y="67" width="1" height="11" fill="#ff4500"/><rect x="417" y="71" width="5" height="2" fill="#ff4500"/><rect x="411" y="63" width="1" height="12" fill="#00ff00"/><rect x="409" y="71" width="5" height="2" fill="#00ff00"/><rect x="403" y="57" width="1" height="17" fill="#ff4500"/><rect x="401" y="58" width="5" height="15" fill="#ff4500"/><rect x="395" y="51" width="1" height="12" fill="#ff4500"/><rect x="393" y="51" width="5" height="9" fill="#ff4500"/><rect x="387" y="49" width="1" height="5" fill="#00ff00"/><rect x="385" y="51" width="5" height="3" fill="#00ff00"/><rect x="386" y="52" width="3" height="1" fill="#3cb371"/><rect x="379" y="50" width="1" height="8" fill="#ff4500"/><rect x="377" y="50" width="5" height="4" fill="#ff4500"/><rect x="371" y="49" width="1" height="6" fill="#00ff00"/><rect x="369" y="50" width="5" height="3" fill="#00ff00"/><rect x="370" y="51" width="3" height="1" fill="#3cb371"/><rect x="363" y="47" width="1" height="6" fill="#ff4500"/><rect x="361" y="49" width="5" height="4" fill="#ff4500"/><rect x="355" y="48" width="1" height="5" fill="#00ff00"/><rect x="353" y="49" width="5" height="5" fill="#00ff00"/><rect x="354" y="50" width="3" height="3" fill="#3cb371"/><rect x="347" y="46" width="1" height="8" fill="#ff4500"/><rect x="345" y="47" width="5" height="7" fill="#ff4500"/><rect x="339" y="44" width="1" height="7" fill="#ff4500"/><rect x="337" y="44" width="5" height="5" fill="#ff4500"/><rect x="331" y="41" width="1" height="6" fill="#ff4500"/><rect x="329" y="42" width="5" height="4" fill="#ff4500"/><rect x="323" y="41" width="1" height="13" fill="#00ff00"/><rect x="321" y="42" width="5" height="13" fill="#00ff00"/><rect x="322" y="43" width="3" height="11" fill="#3cb371"/><rect x="315" y="49" width="1" height="20" fill="#00ff00"/><rect x="313" y="53" width="5" height="14" fill="#00ff00"/><rect x="314" y="54" width="3" height="12" fill="#3cb371"/><rect x="307" y="62" width="1" height="14" fill="#00ff00"/><rect x="305" y="65" width="5" height="11" fill="#00ff00"/><rect x="306" y="66" width="3" height="9" fill="#3cb371"/><rect x="299" y="70" width="1" height="8" fill="#00ff00"/><rect x="297" y="74" width="5" height="2" fill="#00ff00"/><rect x="291" y="70" width="1" height="7" fill="#ff4500"/><rect x="289" y="73" width="5" height="3" fill="#ff4500"/><rect x="283" y="71" width="1" height="13" fill="#00ff00"/><rect x="281" y="73" width="5" height="8" fill="#00ff00"/><rect x="282" y="74" width="3" height="6" fill="#3cb371"/><rect x="275" y="64" width="1" height="19" fill="#ff4500"/><rect x="273" y="73" width="5" height="8" fill="#ff4500"/><rect x="267" y="71" width="1" height="19" fill="#00ff00"/><rect x="265" y="73" width="5" height="18" fill="#00ff00"/><rect x="266" y="74" width="3" height="16" fill="#3cb371"/><rect x="259" y="89" width="1" height="9" fill="#00ff00"/><rect x="257" y="89" width="5" height="7" fill="#00ff00"/><rect x="258" y="90" width="3" height="5" fill="#3cb371"/><rect x="251" y="77" width="1" height="27" fill="#00ff00"/><rect x="249" y="95" width="5" height="3" fill="#00ff00"/><rect x="250" y="96" width="3" height="1" fill="#3cb371"/><rect x="243" y="90" width="1" height="9" fill="#ff4500"/><rect x="241" y="92" width="5" height="7" fill="#ff4500"/><rect x="235" y="92" width="1" height="8" fill="#00ff00"/><rect x="233" y="92" width="5" height="6" fill="#00ff00"/><rect x="234" y="93" width="3" height="4" fill="#3cb371"/><rect x="227" y="87" width="1" height="14" fill="#ff4500"/><rect x="225" y="88" width="5" height="11" fill="#ff4500"/><rect x="219" y="88" width="1" height="14" fill="#00ff00"/><rect x="217" y="88" width="5" height="14" fill="#00ff00"/><rect x="218" y="89" width="3" height="12" fill="#3cb371"/><rect x="211" y="98" width="1" height="9" fill="#00ff00"/><rect x="209" y="100" width="5" height="8" fill="#00ff00"/><rect x="210" y="101" width="3" height="6" fill="#3cb371"/><rect x="203" y="98" width="1" height="10" fill="#ff4500"/><rect x="201" y="100" width="5" height="8" fill="#ff4500"/><rect x="195" y="98" width="1" height="6" fill="#00ff00"/><rect x="193" y="100" width="5" height="4" fill="#00ff00"/><rect x="194" y="101" width="3" height="2" fill="#3cb371"/><rect x="187" y="98" width="1" height="8" fill="#00ff00"/><rect x="185" y="104" width="5" height="3" fill="#00ff00"/><rect x="186" y="105" width="3" height="1" fill="#3cb371"/><rect x="179" y="96" width="1" height="10" fill="#ff4500"/><rect x="177" y="98" width="5" height="9" fill="#ff4500"/><rect x="171" y="86" width="1" height="14" fill="#ff4500"/><rect x="169" y="86" width="5" height="14" fill="#ff4500"/><rect x="163" y="80" width="1" height="8" fill="#ff4500"/><rect x="161" y="83" width="5" height="5" fill="#ff4500"/><rect x="115" y="100" width="1" height="12" fill="#00ff00"/><rect x="113" y="108" width="5" height="4" fill="#00ff00"/><rect x="114" y="109" width="3" height="2" fill="#3cb371"/><rect x="91" y="105" width="1" height="11" fill="#00ff00"/><rect x="89" y="110" width="5" height="6" fill="#00ff00"/><rect x="90" y="111" width="3" height="4" fill="#3cb371"/><rect x="83" y="114" width="1" height="13" fill="#00ff00"/><rect x="81" y="115" width="5" height="10" fill="#00ff00"/><rect x="82" y="116" width="3" height="8" fill="#3cb371"/><rect x="75" y="121" width="1" height="11" fill="#00ff00"/><rect x="73" y="125" width="5" height="2" fill="#00ff00"/><rect x="67" y="117" width="1" height="9" fill="#ff4500"/><rect x="65" y="119" width="5" height="7" fill="#ff4500"/><rect x="59" y="116" width="1" height="13" fill="#ff4500"/><rect x="57" y="118" width="5" height="3" fill="#ff4500"/><rect x="51" y="110" width="1" height="15" fill="#00ff00"/><rect x="49" y="118" width="5" height="8" fill="#00ff00"/><rect x="50" y="119" width="3" height="6" fill="#3cb371"/><rect x="43" y="117" width="1" height="13" fill="#00ff00"/><rect x="41" y="125" width="5" height="3" fill="#00ff00"/><rect x="42" y="126" width="3" height="1" fill="#3cb371"/><rect x="35" y="120" width="1" height="26" fill="#00ff00"/><rect x="33" y="126" width="5" height="18" fill="#00ff00"/><rect x="34" y="127" width="3" height="16" fill="#3cb371"/><rect x="27" y="131" width="1" height="15" fill="#ff4500"/><rect x="25" y="138" width="5" height="6" fill="#ff4500"/><rect x="19" y="130" width="1" height="15" fill="#ff4500"/><rect x="17" y="133" width="5" height="7" fill="#ff4500"/><rect x="11" y="123" width="1" height="17" fill="#ff4500"/><rect x="9" y="130" width="5" height="5" fill="#ff4500"/><rect x="3" y="118" width="1" height="15" fill="#ff4500"/><rect x="1" y="125" width="5" height="6" fill="#ff4500"/></g><polyline points="915,183 1187,452 1419,190" fill="none" stroke="#fff" stroke-width="1.2"/><rect x="912" y="180" width="6" height="6" fill="#fff"/><rect x="1048" y="315" width="6" height="6" fill="#fff"/><rect x="1184" y="449" width="6" height="6" fill="#fff"/><rect x="1416" y="187" width="6" height="6" fill="#fff"/><path d="M165.5 65.0 L160.0 75.0 L165.5 72.0 Z" fill="#e0a830"/><path d="M165.5 65.0 L171.0 75.0 L165.5 72.0" fill="none" stroke="#8a6a20" stroke-width="1"/><path d="M227.9 72.7 L222.4 82.7 L227.9 79.7 Z" fill="#e0a830"/><path d="M227.9 72.7 L233.4 82.7 L227.9 79.7" fill="none" stroke="#8a6a20" stroke-width="1"/><path d="M276.3 49.7 L270.8 59.7 L276.3 56.7 Z" fill="#e0a830"/><path d="M276.3 49.7 L281.8 59.7 L276.3 56.7" fill="none" stroke="#8a6a20" stroke-width="1"/><path d="M323.4 27.6 L317.9 37.6 L323.4 34.6 Z" fill="#e0a830"/><path d="M323.4 27.6 L328.9 37.6 L323.4 34.6" fill="none" stroke="#8a6a20" stroke-width="1"/><path d="M388.3 34.5 L382.8 44.5 L388.3 41.5 Z" fill="#e0a830"/><path d="M388.3 34.5 L393.8 44.5 L388.3 41.5" fill="none" stroke="#8a6a20" stroke-width="1"/><path d="M484.0 28.0 L478.5 38.0 L484.0 35.0 Z" fill="#e0a830"/><path d="M484.0 28.0 L489.5 38.0 L484.0 35.0" fill="none" stroke="#8a6a20" stroke-width="1"/><path d="M604.2 53.6 L598.7 63.6 L604.2 60.6 Z" fill="#e0a830"/><path d="M604.2 53.6 L609.7 63.6 L604.2 60.6" fill="none" stroke="#8a6a20" stroke-width="1"/><path d="M740.0 105.8 L734.5 115.8 L740.0 112.8 Z" fill="#e0a830"/><path d="M740.0 105.8 L745.5 115.8 L740.0 112.8" fill="none" stroke="#8a6a20" stroke-width="1"/><path d="M764.0 113.4 L758.5 123.4 L764.0 120.4 Z" fill="#e0a830"/><path d="M764.0 113.4 L769.5 123.4 L764.0 120.4" fill="none" stroke="#8a6a20" stroke-width="1"/><path d="M796.0 128.7 L790.5 138.7 L796.0 135.7 Z" fill="#e0a830"/><path d="M796.0 128.7 L801.5 138.7 L796.0 135.7" fill="none" stroke="#8a6a20" stroke-width="1"/><path d="M843.8 168.2 L838.3 178.2 L843.8 175.2 Z" fill="#e0a830"/><path d="M843.8 168.2 L849.3 178.2 L843.8 175.2" fill="none" stroke="#8a6a20" stroke-width="1"/><path d="M900.4 155.4 L894.9 165.4 L900.4 162.4 Z" fill="#e0a830"/><path d="M900.4 155.4 L905.9 165.4 L900.4 162.4" fill="none" stroke="#8a6a20" stroke-width="1"/><path d="M1004.0 209.0 L998.5 219.0 L1004.0 216.0 Z" fill="#e0a830"/><path d="M1004.0 209.0 L1009.5 219.0 L1004.0 216.0" fill="none" stroke="#8a6a20" stroke-width="1"/><path d="M1100.0 254.0 L1094.5 264.0 L1100.0 261.0 Z" fill="#e0a830"/><path d="M1100.0 254.0 L1105.5 264.0 L1100.0 261.0" fill="none" stroke="#8a6a20" stroke-width="1"/><path d="M1228.0 327.4 L1222.5 337.4 L1228.0 334.4 Z" fill="#e0a830"/><path d="M1228.0 327.4 L1233.5 337.4 L1228.0 334.4" fill="none" stroke="#8a6a20" stroke-width="1"/><path d="M1259.8 303.7 L1254.3 313.7 L1259.8 310.7 Z" fill="#e0a830"/><path d="M1259.8 303.7 L1265.3 313.7 L1259.8 310.7" fill="none" stroke="#8a6a20" stroke-width="1"/><path d="M1308.5 204.2 L1303.0 214.2 L1308.5 211.2 Z" fill="#e0a830"/><path d="M1308.5 204.2 L1314.0 214.2 L1308.5 211.2" fill="none" stroke="#8a6a20" stroke-width="1"/><path d="M1364.0 183.8 L1358.5 193.8 L1364.0 190.8 Z" fill="#e0a830"/><path d="M1364.0 183.8 L1369.5 193.8 L1364.0 190.8" fill="none" stroke="#8a6a20" stroke-width="1"/><path d="M1412.3 171.0 L1406.8 181.0 L1412.3 178.0 Z" fill="#e0a830"/><path d="M1412.3 171.0 L1417.8 181.0 L1412.3 178.0" fill="none" stroke="#8a6a20" stroke-width="1"/><path d="M28.0 157.8 L33.5 147.8 L28.0 150.8 Z" fill="#e0a830"/><path d="M28.0 157.8 L22.5 147.8 L28.0 150.8" fill="none" stroke="#8a6a20" stroke-width="1"/><path d="M75.9 143.8 L81.4 133.8 L75.9 136.8 Z" fill="#e0a830"/><path d="M75.9 143.8 L70.4 133.8 L75.9 136.8" fill="none" stroke="#8a6a20" stroke-width="1"/><path d="M115.9 120.9 L121.4 110.9 L115.9 113.9 Z" fill="#e0a830"/><path d="M115.9 120.9 L110.4 110.9 L115.9 113.9" fill="none" stroke="#8a6a20" stroke-width="1"/><path d="M179.5 118.3 L185.0 108.3 L179.5 111.3 Z" fill="#e0a830"/><path d="M179.5 118.3 L174.0 108.3 L179.5 111.3" fill="none" stroke="#8a6a20" stroke-width="1"/><path d="M203.7 119.6 L209.2 109.6 L203.7 112.6 Z" fill="#e0a830"/><path d="M203.7 119.6 L198.2 109.6 L203.7 112.6" fill="none" stroke="#8a6a20" stroke-width="1"/><path d="M252.0 115.8 L257.5 105.8 L252.0 108.8 Z" fill="#e0a830"/><path d="M252.0 115.8 L246.5 105.8 L252.0 108.8" fill="none" stroke="#8a6a20" stroke-width="1"/><path d="M347.6 64.8 L353.1 54.8 L347.6 57.8 Z" fill="#e0a830"/><path d="M347.6 64.8 L342.1 54.8 L347.6 57.8" fill="none" stroke="#8a6a20" stroke-width="1"/><path d="M427.8 101.8 L433.3 91.8 L427.8 94.8 Z" fill="#e0a830"/><path d="M427.8 101.8 L422.3 91.8 L427.8 94.8" fill="none" stroke="#8a6a20" stroke-width="1"/><path d="M571.9 118.3 L577.4 108.3 L571.9 111.3 Z" fill="#e0a830"/><path d="M571.9 118.3 L566.4 108.3 L571.9 111.3" fill="none" stroke="#8a6a20" stroke-width="1"/><path d="M595.5 104.3 L601.0 94.3 L595.5 97.3 Z" fill="#e0a830"/><path d="M595.5 104.3 L590.0 94.3 L595.5 97.3" fill="none" stroke="#8a6a20" stroke-width="1"/><path d="M708.0 179.4 L713.5 169.4 L708.0 172.4 Z" fill="#e0a830"/><path d="M708.0 179.4 L702.5 169.4 L708.0 172.4" fill="none" stroke="#8a6a20" stroke-width="1"/><path d="M755.7 162.4 L761.2 152.4 L755.7 155.4 Z" fill="#e0a830"/><path d="M755.7 162.4 L750.2 152.4 L755.7 155.4" fill="none" stroke="#8a6a20" stroke-width="1"/><path d="M779.4 170.5 L784.9 160.5 L779.4 163.5 Z" fill="#e0a830"/><path d="M779.4 170.5 L773.9 160.5 L779.4 163.5" fill="none" stroke="#8a6a20" stroke-width="1"/><path d="M819.6 221.4 L825.1 211.4 L819.6 214.4 Z" fill="#e0a830"/><path d="M819.6 221.4 L814.1 211.4 L819.6 214.4" fill="none" stroke="#8a6a20" stroke-width="1"/><path d="M891.4 239.3 L896.9 229.3 L891.4 232.3 Z" fill="#e0a830"/><path d="M891.4 239.3 L885.9 229.3 L891.4 232.3" fill="none" stroke="#8a6a20" stroke-width="1"/><path d="M978.8 320.8 L984.3 310.8 L978.8 313.8 Z" fill="#e0a830"/><path d="M978.8 320.8 L973.3 310.8 L978.8 313.8" fill="none" stroke="#8a6a20" stroke-width="1"/><path d="M1011.0 283.9 L1016.5 273.9 L1011.0 276.9 Z" fill="#e0a830"/><path d="M1011.0 283.9 L1005.5 273.9 L1011.0 276.9" fill="none" stroke="#8a6a20" stroke-width="1"/><path d="M1067.0 312.3 L1072.5 302.3 L1067.0 305.3 Z" fill="#e0a830"/><path d="M1067.0 312.3 L1061.5 302.3 L1067.0 305.3" fill="none" stroke="#8a6a20" stroke-width="1"/><path d="M1106.7 301.9 L1112.2 291.9 L1106.7 294.9 Z" fill="#e0a830"/><path d="M1106.7 301.9 L1101.2 291.9 L1106.7 294.9" fill="none" stroke="#8a6a20" stroke-width="1"/><path d="M1186.3 460.5 L1191.8 450.5 L1186.3 453.5 Z" fill="#e0a830"/><path d="M1186.3 460.5 L1180.8 450.5 L1186.3 453.5" fill="none" stroke="#8a6a20" stroke-width="1"/><path d="M1266.9 383.3 L1272.4 373.3 L1266.9 376.3 Z" fill="#e0a830"/><path d="M1266.9 383.3 L1261.4 373.3 L1266.9 376.3" fill="none" stroke="#8a6a20" stroke-width="1"/><path d="M1291.5 372.9 L1297.0 362.9 L1291.5 365.9 Z" fill="#e0a830"/><path d="M1291.5 372.9 L1286.0 362.9 L1291.5 365.9" fill="none" stroke="#8a6a20" stroke-width="1"/><path d="M1340.3 310.4 L1345.8 300.4 L1340.3 303.4 Z" fill="#e0a830"/><path d="M1340.3 310.4 L1334.8 300.4 L1340.3 303.4" fill="none" stroke="#8a6a20" stroke-width="1"/><path d="M1387.6 269.6 L1393.1 259.6 L1387.6 262.6 Z" fill="#e0a830"/><path d="M1387.6 269.6 L1382.1 259.6 L1387.6 262.6" fill="none" stroke="#8a6a20" stroke-width="1"/><path d="M1460.1 301.9 L1465.6 291.9 L1460.1 294.9 Z" fill="#e0a830"/><path d="M1460.1 301.9 L1454.6 291.9 L1460.1 294.9" fill="none" stroke="#8a6a20" stroke-width="1"/><path d="M1515 305 Q1550 258 1588 214" fill="none" stroke="#daa520" stroke-width="4"/><path d="M1595 204 L1582 213 L1592 220 Z" fill="#daa520"/><polyline points="0.0,522.6 27.9,525.8 37.8,519.5 51.7,516.7 77.6,518.7 91.5,506.7 101.5,510.7 115.4,510.7 125.3,506.7 139.3,506.7 147.2,508.7 155.2,503.5 162.4,504.7 175.1,515.5 185.0,516.7 195.0,514.7 204.9,516.7 218.9,507.6 226.8,512.7 234.8,510.7 242.7,512.7 250.7,512.7 258.7,509.9 266.6,502.0 274.6,504.7 298.4,503.5 308.4,498.8 324.3,490.8 332.3,492.0 346.2,498.8 356.1,498.0 376.0,500.8 388.0,500.8 401.9,516.7 415.8,517.9 425.8,527.4 433.7,526.6 453.6,515.5 465.6,509.9 477.5,503.5 483.5,502.8 497.4,515.5 513.3,516.7 523.3,524.6 533.2,528.6 543.2,529.8 557.1,530.6 563.1,534.6 573.0,524.6 589.0,521.9 596.9,520.7 604.9,513.9 618.8,519.5 626.7,516.7 634.7,523.4 652.6,523.4 660.6,538.6 674.5,548.5 682.5,540.6 692.4,540.6 700.4,537.8 716.3,540.6 724.2,539.4 732.2,526.6 740.0,527.8 761.9,527.8 771.8,531.4 779.8,531.4 787.8,529.4 795.7,532.6 803.7,534.6 817.6,545.7 835.5,545.7 843.5,537.8 851.4,539.4 863.4,538.6 885.2,538.6 891.2,534.6 899.2,525.8 907.1,529.8 923.0,535.4 937.0,534.6 941.0,536.6 954.9,545.7 962.8,547.3 972.8,556.5 978.8,556.5 986.7,535.4 994.7,530.6 1002.6,526.6 1010.6,533.8 1020.5,531.4 1028.5,531.4 1046.4,538.6 1066.3,539.4 1082.2,532.6 1096.2,529.0 1112.1,528.6 1118.0,528.2 1132.0,538.6 1145.9,542.5 1161.8,553.7 1171.8,542.5 1179.7,549.7 1187.7,548.9 1195.6,531.4 1203.6,531.4 1211.5,523.4 1219.5,526.6 1227.5,521.9 1237.4,521.9 1251.3,514.7 1259.3,524.6 1269.3,519.5 1279.2,518.7 1291.1,519.5 1299.1,517.9 1307.0,497.2 1315.0,504.7 1324.9,504.7 1338.9,510.7 1348.8,507.6 1362.7,500.8 1376.7,508.2 1388.6,508.2 1400.6,504.7 1412.5,502.8 1420.5,502.8 1426.4,505.9 1436.4,505.9 1444.3,508.7 1460.3,520.7 1468.2,517.9 1476.2,521.9 1484.1,519.5" fill="none" stroke="#f0a828" stroke-width="1.3"/><polyline points="0.0,622.5 4.8,620.9 13.9,626.5 27.9,647.6 35.8,655.6 41.8,652.8 51.7,635.7 59.7,625.7 67.6,622.5 75.6,622.5 83.6,615.8 91.5,595.9 99.5,593.1 107.4,599.8 115.4,605.8 123.4,601.8 131.3,593.9 139.3,587.5 147.2,589.1 159.2,587.9 167.1,591.9 175.1,599.8 187.0,637.6 195.0,647.6 202.9,661.5 210.9,676.6 222.8,659.5 234.8,642.4 242.7,656.7 250.7,656.0 258.7,651.6 266.6,619.7 274.6,609.8 282.5,603.8 290.5,609.8 302.4,603.8 314.4,595.9 324.3,581.1 334.3,581.9 346.2,587.9 358.1,593.1 370.1,595.9 382.0,602.6 390.0,606.6 397.9,619.7 405.9,645.6 417.8,687.4 425.8,695.3 433.7,698.1 445.7,688.6 457.6,661.5 469.6,633.7 481.5,603.8 489.5,605.0 497.4,621.7 505.4,639.6 517.3,653.6 537.2,691.4 549.1,693.4 557.1,694.2 569.0,689.4 585.0,673.5 596.9,664.7 612.8,635.7 620.8,625.7 628.7,625.7 636.7,634.5 648.6,649.6 660.6,677.4 674.5,706.1 680.5,700.5 700.4,690.2 716.3,692.6 724.2,693.4 736.2,676.6 748.0,666.7 759.9,666.7 775.8,663.5 787.8,658.3 799.7,662.3 811.6,687.4 819.6,693.4 829.5,693.4 843.5,685.4 859.4,680.6 871.3,683.4 885.2,682.2 895.2,665.5 907.1,641.6 917.1,642.4 931.0,648.8 939.0,648.8 946.9,655.6 962.8,691.4 978.8,691.4 990.7,675.5 1002.6,647.6 1014.6,651.6 1026.5,658.3 1034.5,658.3 1050.4,674.3 1062.3,685.4 1070.3,686.6 1082.2,678.2 1096.1,667.5 1104.1,668.3 1118.0,667.5 1137.9,696.5 1149.9,697.3 1163.8,702.1 1171.8,697.3 1181.7,698.1 1193.6,689.4 1203.6,673.5 1211.5,651.6 1219.5,649.6 1227.5,639.6 1235.4,638.4 1251.3,607.8 1269.2,605.8 1277.2,613.8 1285.2,603.8 1297.1,603.8 1307.1,594.7 1323.0,594.7 1336.9,613.8 1346.8,623.7 1354.8,613.8 1362.8,593.9 1370.7,587.9 1380.7,605.8 1386.6,609.8 1396.6,609.8 1412.5,591.9 1420.5,591.9 1432.4,603.8 1444.3,615.8 1456.3,641.6 1464.2,669.5 1475.4,697.3 1484.1,695.3" fill="none" stroke="#20b2aa" stroke-width="1.6"/><path d="M0.0 625.7 C1.3 625.4 5.0 623.6 8.0 623.7 C10.9 623.9 13.9 623.2 17.9 626.5 C21.9 629.8 27.5 639.4 31.8 643.6 C36.1 647.8 40.5 650.7 43.8 651.6 C47.1 652.4 47.8 652.8 51.7 648.8 C55.7 644.8 63.0 632.3 67.6 627.7 C72.3 623.1 76.3 623.4 79.6 620.9 C82.9 618.5 83.2 617.2 87.5 613.0 C91.9 608.8 99.5 597.9 105.5 595.9 C111.4 593.9 119.4 600.2 123.4 601.0 C127.3 601.9 126.3 602.6 129.3 601.0 C132.3 599.5 137.6 594.0 141.3 591.9 C144.9 589.8 147.9 589.0 151.2 588.3 C154.5 587.6 157.8 587.3 161.2 587.9 C164.5 588.5 168.5 589.6 171.1 591.9 C173.8 594.2 173.8 595.5 177.1 601.8 C180.4 608.1 186.0 620.4 191.0 629.7 C196.0 639.0 202.6 651.2 206.9 657.5 C211.2 663.8 213.2 666.8 216.9 667.5 C220.5 668.2 225.2 664.2 228.8 661.5 C232.5 658.9 235.1 653.2 238.8 651.6 C242.4 649.9 247.4 651.1 250.7 651.6 C254.0 652.0 255.3 656.7 258.7 654.4 C262.0 652.0 266.6 645.1 270.6 637.6 C274.6 630.2 278.9 615.0 282.5 609.8 C286.2 604.6 288.5 607.6 292.5 606.6 C296.5 605.6 302.1 605.9 306.4 603.8 C310.7 601.7 313.0 597.5 318.3 593.9 C323.7 590.2 332.9 582.9 338.2 581.9 C343.5 580.9 344.2 585.6 350.2 587.9 C356.1 590.2 366.8 592.5 374.1 595.9 C381.4 599.2 388.6 601.8 394.0 607.8 C399.3 613.8 401.2 620.1 405.9 631.7 C410.5 643.3 417.2 666.8 421.8 677.4 C426.4 688.1 430.4 692.2 433.7 695.3 C437.1 698.5 438.4 698.9 441.7 696.5 C445.0 694.2 449.0 689.2 453.6 681.4 C458.3 673.6 464.9 659.5 469.6 649.6 C474.2 639.6 477.5 628.5 481.5 621.7 C485.5 615.0 490.1 610.3 493.4 609.0 C496.8 607.7 498.1 609.0 501.4 613.8 C504.7 618.5 508.7 629.0 513.3 637.6 C518.0 646.3 523.9 657.2 529.2 665.5 C534.6 673.8 540.5 682.7 545.2 687.4 C549.8 692.0 553.8 692.2 557.1 693.4 C560.4 694.5 561.1 695.0 565.1 694.2 C569.0 693.4 575.0 692.7 581.0 688.6 C586.9 684.5 594.2 678.0 600.9 669.5 C607.5 661.0 615.5 644.6 620.8 637.6 C626.1 630.7 628.7 628.4 632.7 627.7 C636.7 627.0 640.7 630.4 644.6 633.7 C648.6 637.0 651.3 637.6 656.6 647.6 C661.9 657.5 671.8 684.5 676.5 693.4 C681.1 702.2 681.8 699.3 684.4 700.5 C687.1 701.7 688.8 701.6 692.4 700.5 C696.0 699.5 702.3 695.7 706.3 694.2 C710.3 692.6 712.3 692.2 716.3 691.4 C720.3 690.6 724.3 692.7 730.2 689.4 C736.1 686.1 745.7 675.5 751.9 671.5 C758.2 667.5 763.2 666.6 767.9 665.5 C772.5 664.4 776.1 665.4 779.8 664.7 C783.4 664.0 786.1 662.1 789.7 661.5 C793.4 661.0 798.0 659.2 801.7 661.5 C805.3 663.8 807.3 670.5 811.6 675.5 C815.9 680.4 823.2 688.7 827.5 691.4 C831.9 694.0 833.5 692.4 837.5 691.4 C841.5 690.4 846.4 686.9 851.4 685.4 C856.4 683.9 862.0 682.7 867.3 682.2 C872.6 681.7 878.6 683.8 883.3 682.2 C887.9 680.6 891.2 677.4 895.2 672.7 C899.2 667.9 903.2 658.4 907.1 653.6 C911.1 648.7 915.1 644.9 919.1 643.6 C923.0 642.3 926.4 643.9 931.0 645.6 C935.6 647.3 941.0 646.9 946.9 653.6 C952.9 660.2 961.5 679.3 966.8 685.4 C972.1 691.5 974.8 690.2 978.8 690.2 C982.7 690.2 986.1 689.8 990.7 685.4 C995.3 681.0 1002.0 669.2 1006.6 663.5 C1011.3 657.9 1014.6 652.9 1018.6 651.6 C1022.5 650.2 1026.5 654.2 1030.5 655.6 C1034.5 656.9 1036.5 655.2 1042.4 659.5 C1048.4 663.8 1060.7 677.2 1066.3 681.4 C1071.9 685.6 1071.6 685.8 1076.3 684.6 C1080.9 683.4 1088.5 676.9 1094.2 674.3 C1099.8 671.6 1105.4 669.5 1110.1 668.7 C1114.7 667.9 1118.0 668.2 1122.0 669.5 C1126.0 670.8 1129.3 672.8 1134.0 676.6 C1138.6 680.5 1144.9 688.8 1149.9 692.6 C1154.8 696.3 1159.2 698.2 1163.8 699.3 C1168.4 700.5 1172.7 700.3 1177.7 699.3 C1182.7 698.3 1188.3 697.5 1193.6 693.4 C1198.9 689.2 1204.3 682.1 1209.6 674.3 C1214.9 666.4 1220.2 652.8 1225.5 646.4 C1230.8 640.0 1235.4 641.8 1241.4 635.7 C1247.4 629.6 1256.0 614.6 1261.3 609.8 C1266.6 605.0 1268.6 606.9 1273.2 606.6 C1277.9 606.3 1283.8 608.3 1289.1 607.8 C1294.5 607.3 1299.1 605.8 1305.1 603.8 C1311.0 601.8 1317.7 593.4 1325.0 595.9 C1332.3 598.3 1343.5 614.8 1348.8 618.5 C1354.1 622.3 1352.8 622.0 1356.8 618.5 C1360.8 615.1 1368.7 601.8 1372.7 597.9 C1376.7 593.9 1376.0 593.3 1380.7 594.7 C1385.3 596.0 1395.3 605.0 1400.6 605.8 C1405.9 606.7 1408.5 601.8 1412.5 599.8 C1416.5 597.9 1420.5 593.9 1424.4 593.9 C1428.4 593.9 1432.1 595.9 1436.4 599.8 C1440.7 603.8 1446.3 610.8 1450.3 617.8 C1454.3 624.7 1456.6 631.7 1460.3 641.6 C1463.9 651.6 1468.2 668.8 1472.2 677.4 C1476.2 686.1 1482.1 690.7 1484.1 693.4" fill="none" stroke="#ff1010" stroke-width="1.6"/><rect x="1839" y="270" width="39" height="11" fill="#fff"/></svg>
<div class="ax" style="left:1842px;top:39px">4734.21</div>
<div class="ax" style="left:1842px;top:71px">4684.61</div>
<div class="ax" style="left:1842px;top:103px">4635.01</div>
<div class="ax" style="left:1842px;top:135px">4585.41</div>
<div class="ax" style="left:1842px;top:167px">4535.81</div>
<div class="ax" style="left:1842px;top:199px">4486.21</div>
<div class="ax" style="left:1842px;top:231px">4436.61</div>
<div class="ax" style="left:1842px;top:263px">4387.01</div>
<div class="ax" style="left:1842px;top:295px">4337.41</div>
<div class="ax" style="left:1842px;top:327px">4287.81</div>
<div class="ax" style="left:1842px;top:359px">4238.21</div>
<div class="ax" style="left:1842px;top:391px">4188.61</div>
<div class="ax" style="left:1842px;top:423px">4139.01</div>
<div class="ax" style="left:1841px;top:271px;color:#000">4372.81</div>
<div class="ax" style="left:1842px;top:462px">100.00</div>
<div class="ax" style="left:1842px;top:490px">70.00</div>
<div class="ax" style="left:1842px;top:512px">50.00</div>
<div class="ax" style="left:1842px;top:534px">30.00</div>
<div class="ax" style="left:1842px;top:562px">0.00</div>
<div class="ax" style="left:1842px;top:575px">100.00</div>
<div class="ax" style="left:1842px;top:598px">80.00</div>
<div class="ax" style="left:1842px;top:680px">20.00</div>
<div class="ax" style="left:1842px;top:702px">0.00</div>
<div class="fb" style="left:1803px;top:173px">100.0%</div>
<div class="fb" style="left:1807px;top:276px">61.8%</div>
<div class="fb" style="left:1807px;top:308px">50.0%</div>
<div class="fb" style="left:1807px;top:339px">38.2%</div>
<div class="fb" style="left:1807px;top:379px">23.6%</div>
<div class="fb" style="left:1812px;top:441px">0.0%</div>
<div class="fb" style="left:1795px;top:313px;color:#2e8b57">FE50.0%</div>
<div class="fb" style="left:1805px;top:38px">150.0%</div>
<div class="a" style="left:1649px;top:33px;font-size:18px;line-height:20px;color:#00ff00;letter-spacing:1.3px;transform:scaleX(1.12);transform-origin:0 0">00:12:25 (-2.77%)</div>
<svg class="a" style="left:0;top:31px" width="16" height="16"><rect x="0.5" y="5.5" width="4" height="9" fill="#5a1a10" stroke="#e04040"/><rect x="7.5" y="3.5" width="4" height="11" fill="#0a2a4a" stroke="#3d8ff0"/><rect x="2.5" y="1.5" width="6" height="3" fill="none" stroke="#aaa"/></svg>
<div class="a" style="left:18px;top:35px;font-size:10px;line-height:11px;color:#fff;letter-spacing:-0.2px">GOLD#, M15:&nbsp; GOLD</div>
<div class="a" style="left:-1px;top:266px;font-size:10px;line-height:10px;color:#fff;letter-spacing:-0.2px">50 at 4371.94</div>
<div class="a" style="left:0;top:465px;font-size:10px;line-height:10px;color:#fff;letter-spacing:-0.3px">4) 47.22</div>
<div class="a" style="left:0;top:579px;font-size:10px;line-height:10px;color:#fff;letter-spacing:-0.3px">(14,3,3) 11.97 14.28</div>
<div class="tl" style="left:2px">2026</div>
<div class="tl" style="left:35px">19 Mar 19:15</div>
<div class="tl" style="left:99px">19 Mar 21:15</div>
<div class="tl" style="left:163px">20 Mar 00:15</div>
<div class="tl" style="left:227px">20 Mar 02:15</div>
<div class="tl" style="left:291px">20 Mar 04:15</div>
<div class="tl" style="left:355px">20 Mar 06:15</div>
<div class="tl" style="left:419px">20 Mar 08:15</div>
<div class="tl" style="left:483px">20 Mar 10:15</div>
<div class="tl" style="left:547px">20 Mar 12:15</div>
<div class="tl" style="left:611px">20 Mar 14:15</div>
<div class="tl" style="left:675px">20 Mar 16:15</div>
<div class="tl" style="left:739px">20 Mar 18:15</div>
<div class="tl" style="left:803px">20 Mar 20:15</div>
<div class="tl" style="left:867px">20 Mar 22:15</div>
<div class="tl" style="left:931px">23 Mar 01:15</div>
<div class="tl" style="left:995px">23 Mar 03:15</div>
<div class="tl" style="left:1059px">23 Mar 05:15</div>
<div class="tl" style="left:1123px">23 Mar 07:15</div>
<div class="tl" style="left:1187px">23 Mar 09:15</div>
<div class="tl" style="left:1251px">23 Mar 11:15</div>
<div class="tl" style="left:1315px">23 Mar 13:15</div>
<div class="tl" style="left:1379px">23 Mar 15:15</div>
<div class="tl" style="left:1443px">23 Mar 17:15</div>
<div class="a" style="left:0;top:51px;width:19px;height:23px;background:linear-gradient(#6470a8,#48558f);border:1px solid #2a78d0;border-left:none"></div>
<div class="a" style="left:-4px;top:56px;font-size:12.5px;line-height:13px;color:#e8ecff;letter-spacing:-0.5px">LL</div>
<div class="a" style="left:0;top:72px;width:15px;height:2px;background:#5aaaf0"></div>
<div class="a" style="left:21px;top:51px;width:96px;height:21px;background:#1c1c1c;border:1px solid #9a9a9a;border-radius:1px"></div>
<div class="a" style="left:22px;top:52px;width:18px;height:19px;background:#363636;border-right:1px solid #9a9a9a"></div>
<div class="a" style="left:97px;top:52px;width:19px;height:19px;background:#363636;border-left:1px solid #9a9a9a"></div>
<svg class="a" style="left:0;top:45px" width="162" height="30"><path d="M27.5 14 h6 l-3 3.5 z" fill="#fff"/><path d="M102.5 17.5 h6 l-3 -3.5 z" fill="#fff"/></svg>
<div class="a" style="left:40px;top:54px;width:53px;text-align:right;font-size:13px;line-height:14px;color:#fff;letter-spacing:-1px">50.00</div>
<div class="a" style="left:118px;top:51px;width:44px;height:23px;background:linear-gradient(#6470a8,#48558f);border:1px solid #2a78d0"></div>
<div class="a" style="left:128px;top:56px;font-size:12.5px;line-height:13px;color:#e8ecff;letter-spacing:-1px">BUY</div>
<div class="a" style="left:122px;top:72px;width:36px;height:2px;background:#5aaaf0"></div>
<div class="a" style="left:0;top:73px;width:69px;height:36px;background:linear-gradient(#4a5a98,#1e2a68);border:1px solid #2a78d0;border-left:none"></div>
<div class="a" style="left:70px;top:73px;width:92px;height:36px;background:linear-gradient(#4a5a98,#1e2a68);border:1px solid #2a78d0"></div>
<div class="a" style="left:-8px;top:91px;font-size:13px;line-height:14px;font-weight:bold;color:#fff;letter-spacing:-0.4px">4372</div>
<div class="a" style="left:21px;top:75px;font-size:32px;line-height:32px;color:#fff;transform:scaleX(0.86);transform-origin:0 0">81</div>
<div class="a" style="left:84px;top:91px;font-size:13px;line-height:14px;font-weight:bold;color:#fff;letter-spacing:-0.4px">4373</div>
<div class="a" style="left:118px;top:75px;font-size:32px;line-height:32px;color:#fff;transform:scaleX(0.86);transform-origin:0 0">13</div>

<div class="a" style="left:0;top:733px;width:1885px;height:111px;background:#1e1e1e"></div>
<div class="a" style="left:0;top:733px;width:1885px;height:26px;background:#2f2f2f;border-top:1px solid #8a8a8a;border-bottom:1px solid #9a9a9a"></div>
<div class="a" style="left:0;top:733px;width:61px;height:19px;background:#1e1e1e;border:1px solid #8a8a8a;border-left:none;border-top:none"></div>
<div class="a" style="left:-3px;top:737px;font-size:12px;line-height:14px;color:#e0e0e0;letter-spacing:-0.6px">OLD#,M15</div>
<svg class="a" style="left:75px;top:735px" width="14" height="16"><path d="M1.5 5.5 h10 l0.5 9 h-11 z" fill="#3a2a10" stroke="#e08a1e" stroke-width="1.2"/><path d="M4 5.5 v-2 a2.5 2.5 0 0 1 5 0 v2" fill="none" stroke="#e08a1e" stroke-width="1.2"/></svg>
<div class="a" style="left:97px;top:736px;font-size:12.5px;line-height:14px;color:#e0e0e0">Market</div>
<svg class="a" style="left:1845px;top:738px" width="40" height="12"><path d="M11 2 v8 l-4 -4 z" fill="#555"/><path d="M28 2 v8 l4 -4 z" fill="#555"/></svg>

<div class="a" style="left:214px;top:759px;width:1px;height:43px;background:#3c3c3c"></div>
<div class="a" style="left:372px;top:759px;width:1px;height:43px;background:#3c3c3c"></div>
<div class="a" style="left:512px;top:759px;width:1px;height:43px;background:#3c3c3c"></div>
<div class="a" style="left:688px;top:759px;width:1px;height:43px;background:#3c3c3c"></div>
<div class="a" style="left:864px;top:759px;width:1px;height:43px;background:#3c3c3c"></div>
<div class="a" style="left:1040px;top:759px;width:1px;height:43px;background:#3c3c3c"></div>
<div class="a" style="left:1216px;top:759px;width:1px;height:43px;background:#3c3c3c"></div>
<div class="a" style="left:1392px;top:759px;width:1px;height:43px;background:#3c3c3c"></div>
<div class="a" style="left:1567px;top:759px;width:1px;height:43px;background:#3c3c3c"></div>
<div class="th" style="left:-3px">ymbol</div>
<div class="th" style="left:221px">Ticket</div>
<svg class="a" style="left:269px;top:767px" width="10" height="6"><path d="M1 5 h7 l-3.5 -4 z" fill="#ddd"/></svg>
<div class="th" style="right:1376px">Time</div>
<div class="th" style="right:1201px">Type</div>
<div class="th" style="right:1025px">Volume</div>
<div class="th" style="right:849px">Price</div>
<div class="th" style="right:673px">S / L</div>
<div class="th" style="right:497px">T / P</div>
<div class="th" style="right:321px">Price</div>
<div class="th" style="right:3px">Profit</div>
<div class="a" style="left:0;top:784px;width:3px;height:15px;border:1px solid #3d8ff0;border-left:none"></div>
<div class="td" style="left:9px;letter-spacing:0">gold#</div>
<div class="td" style="left:218px">711589444</div>
<div class="td" style="right:1376px;color:#e0e0e0">2026.03.23 18:32:25</div>
<div class="td" style="right:1201px;color:#e0e0e0">buy</div>
<div class="td" style="right:1025px;color:#e0e0e0">50</div>
<div class="td" style="right:849px;color:#e0e0e0">4371.94</div>
<div class="td" style="right:321px;color:#e0e0e0">4372.81</div>
<div class="td" style="right:19px;color:#3d8ff0">4 350.00</div>
<svg class="a" style="left:1874px;top:788px" width="10" height="10"><path d="M1.5 1.5 L8.5 8.5 M8.5 1.5 L1.5 8.5" stroke="#c8c8c8" stroke-width="2"/></svg>
<div class="a" style="left:0;top:802px;width:1885px;height:20px;background:#3e3e3e"></div>
<div class="a" style="left:8px;top:805px;font-size:12px;line-height:14px;color:#f0f0f0;font-weight:bold;letter-spacing:-0.15px">Balance: 4 777 258.54 USD&nbsp; Equity: 4 781 608.54&nbsp; Margin: 21 859.70&nbsp; Free Margin: 4 759 748.84&nbsp; Margin Level: 21 874.08 %</div>
<div class="a" style="right:17px;top:806px;font-size:12.5px;line-height:14px;color:#f0f0f0;font-weight:bold">4 350.00</div>
<svg class="a" style="left:-9px;top:806px" width="12" height="12"><circle cx="6" cy="6" r="4.5" fill="none" stroke="#aaa" stroke-width="1.2"/></svg>
</body></html>
